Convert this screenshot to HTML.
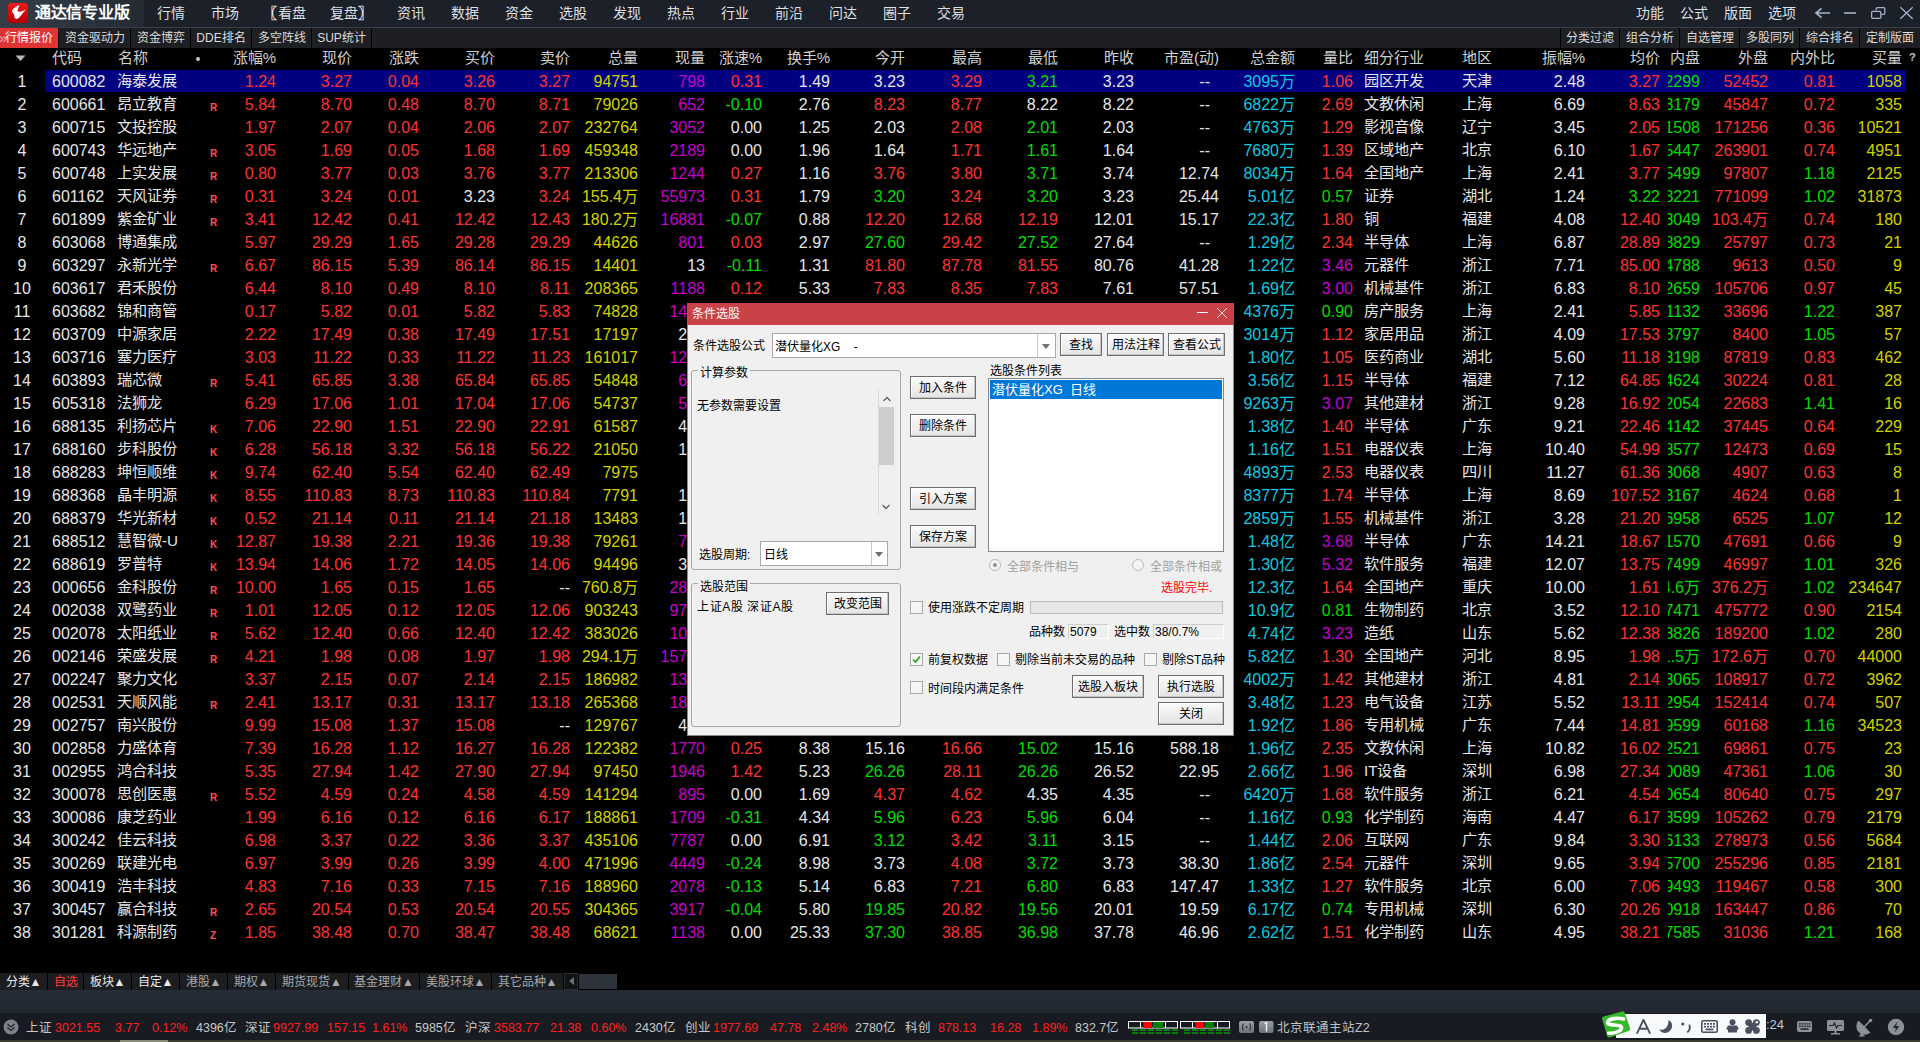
<!DOCTYPE html>
<html lang="zh-CN">
<head>
<meta charset="utf-8">
<style>
*{margin:0;padding:0;box-sizing:border-box}
html,body{width:1920px;height:1042px;overflow:hidden;background:#000}
body{position:relative;font-family:"Liberation Sans",sans-serif;color:#e6e6e6}
.abs{position:absolute}
/* menu bar */
#menu{position:absolute;left:0;top:0;width:1920px;height:27px;background:#1c2028}
#logoArea{position:absolute;left:0;top:0;width:144px;height:27px;background:linear-gradient(90deg,#363e49,#232a33)}
#logo{position:absolute;left:8px;top:3px;width:20px;height:20px;border-radius:4px;background:linear-gradient(#f01818,#b80000)}
#title{position:absolute;left:35px;top:2px;font-size:16px;font-weight:bold;color:#fff;line-height:22px;letter-spacing:-0.3px}
.mi{position:absolute;top:0;line-height:27px;font-size:14px;color:#dcdfe4}
#menuLine{position:absolute;left:0;top:27px;width:1920px;height:1px;background:#3a3f47}
/* tab bar */
#tabs{position:absolute;left:0;top:28px;width:1920px;height:20px;background:#1e1f22}
.tb{position:absolute;top:0;height:20px;line-height:20px;font-size:12px;color:#dcdcdc;text-align:center}
.tsep{position:absolute;top:0;width:1px;height:20px;background:#000}
/* header */
.hd{position:absolute;top:47px;height:22px;line-height:22px;font-size:15px;color:#d0d0d0;white-space:nowrap}
.hr{text-align:right;width:120px}
/* table */
.row{position:absolute;left:0;width:1920px;height:23px;font-size:16px;line-height:23px;white-space:nowrap}
.row i{position:absolute;top:0;font-style:normal}
.row.sel::before{content:"";position:absolute;left:45px;top:0;width:1861px;height:22px;background:#000080}
.row i.nm{color:#e6e6e6;font-size:15.2px;top:-1px}
.flag{position:absolute;left:210px;top:10px;font-size:10px;line-height:10px;color:#ff5050;font-weight:bold}
.nei{position:absolute;left:1668px;top:0;width:32px;height:23px;overflow:hidden}

/* dialog */
#dlg{position:absolute;left:687px;top:303px;width:547px;height:433px;background:#f0f0f0;box-shadow:inset 1px 0 0 #8a8a8a,inset -1px 0 0 #8a8a8a,inset 0 -1px 0 #8a8a8a;z-index:10;font-size:12px;color:#000}
#dlg::before{content:"";position:absolute;left:0;top:0;width:547px;height:22px;background:#c84248}
#dtitle{position:absolute;left:5px;top:3px;line-height:16px;font-size:12px;color:#fff}
.dmin{position:absolute;left:510px;top:10px;width:11px;height:1px;background:#fff}
.dx{position:absolute;left:529px;top:5px}
.dt{position:absolute;line-height:16px;font-size:12px;white-space:nowrap;color:#000}
.combo{position:absolute;background:#fff;border:1px solid #a8a8a8}
.cbsep{position:absolute;top:0;width:1px;height:23px;background:#c8c8c8}
.carr{position:absolute;width:0;height:0;border-left:4.5px solid transparent;border-right:4.5px solid transparent;border-top:5px solid #707070}
.btn{position:absolute;border:1px solid #6e6e6e;background:linear-gradient(#fbfbfb,#e4e4e4);font-size:12px;line-height:23px;text-align:center;color:#000;box-shadow:inset -1px -1px 0 #c6c6c6, inset 1px 1px 0 #fff}
.grp{position:absolute;border:1px solid #a8a8a8;border-radius:3px}
.glab{background:#f0f0f0;padding:0 2px}
.vsep{position:absolute;width:1px;background:#dcdcdc}
.radio{position:absolute;width:12px;height:12px;border-radius:50%;border:1px solid #b8b8b8;background:#f4f4f4}
.rdot{position:absolute;left:3px;top:3px;width:4px;height:4px;border-radius:50%;background:#909090}
.chk{position:absolute;width:13px;height:13px;border:1px solid #a8a8a8;background:#f6f6f6}
.fld{position:absolute;height:15px;line-height:14px;border:1px solid #d0d0d0;border-right-color:#fff;border-bottom-color:#fff;background:#f0f0f0;font-size:12px;padding-left:1px;color:#000}

/* bottom */
#btabs{position:absolute;left:0;top:973px;width:1920px;height:17px;background:#000}
.bt{position:absolute;top:0;height:17px;line-height:19px;background:#1b1d21;font-size:12px;color:#e8e8e8;text-align:center;white-space:nowrap}
.bt.g{color:#a8a8a8}
#strip{position:absolute;left:0;top:990px;width:1920px;height:23px;background:linear-gradient(#262c35,#222830)}
#status{position:absolute;left:0;top:1013px;width:1920px;height:27px;background:#181c22}
.st{position:absolute;top:2px;line-height:27px;font-size:12.5px;color:#c8c8c8;white-space:nowrap}
.st.r{color:#ff1e1e}
#sogou{position:absolute;left:1600px;top:1008px;z-index:5}
</style>
</head>
<body>
<div id="menu">
  <div id="logoArea"></div>
  <div id="title">通达信专业版</div>
  <div class="mi" style="left:157px">行情</div>
  <div class="mi" style="left:211px">市场</div>
  <div class="mi" style="left:263px;font-weight:bold">〖</div><div class="mi" style="left:278px">看盘</div>
  <div class="mi" style="left:330px">复盘</div><div class="mi" style="left:358px;font-weight:bold">〗</div>
  <div class="mi" style="left:397px">资讯</div>
  <div class="mi" style="left:451px">数据</div>
  <div class="mi" style="left:505px">资金</div>
  <div class="mi" style="left:559px">选股</div>
  <div class="mi" style="left:613px">发现</div>
  <div class="mi" style="left:667px">热点</div>
  <div class="mi" style="left:721px">行业</div>
  <div class="mi" style="left:775px">前沿</div>
  <div class="mi" style="left:829px">问达</div>
  <div class="mi" style="left:883px">圈子</div>
  <div class="mi" style="left:937px">交易</div>
  <div class="mi" style="left:1636px">功能</div>
  <div class="mi" style="left:1680px">公式</div>
  <div class="mi" style="left:1724px">版面</div>
  <div class="mi" style="left:1768px">选项</div>
  <svg class="abs" style="left:1800px;top:0" width="120" height="27" viewBox="0 0 120 27">
   <path d="M30 13H16.5M21.5 8.3L16 13L21.5 17.7" stroke="#a4b4c8" stroke-width="1.7" fill="none"/>
   <path d="M44 13H56" stroke="#a4b4c8" stroke-width="1.6"/>
   <path d="M76.2 10.2V8.8Q76.2 7.6 77.4 7.6H83.6Q84.8 7.6 84.8 8.8V13.2Q84.8 14.4 83.6 14.4H81.2" stroke="#a4b4c8" stroke-width="1.3" fill="none"/>
   <rect x="71.6" y="11.4" width="9.2" height="6.9" rx="1.2" stroke="#a4b4c8" stroke-width="1.3" fill="none"/>
   <path d="M100.3 7.3L112.7 18.7M112.7 7.3L100.3 18.7" stroke="#a4b4c8" stroke-width="1.3" fill="none"/>
  </svg>
  <svg class="abs" style="left:8px;top:3px" width="21" height="21" viewBox="0 0 21 21"><defs><linearGradient id="lg" x1="0" y1="0" x2="0" y2="1"><stop offset="0" stop-color="#f41a1a"/><stop offset="1" stop-color="#b00000"/></linearGradient></defs><rect x="0" y="0" width="20" height="20" rx="3.5" fill="url(#lg)"/><path d="M11.5 2C8 3.5 4.5 6 4 8C4 9.5 5.5 10.5 6.2 11.5C6 13.5 6.5 15.5 8.2 16C9.5 16 10.5 15.5 11.5 14.3L17.8 6.6C15.5 7.8 12.5 9.2 10.5 8.7C9.3 8.2 9.5 6.5 11.5 2Z" fill="#fff"/></svg>
</div>
<div id="menuLine"></div>
<div id="tabs">
  <div class="tb" style="left:0;width:58px;background:#e03434;color:#fff;text-align:left;padding-left:5px">行情报价</div><div class="abs" style="left:-1px;top:2px;font-size:15px;line-height:16px;color:#f0a8a8">»</div>
  <div class="tsep" style="left:58px"></div>
  <div class="tb" style="left:59px;width:71px">资金驱动力</div>
  <div class="tsep" style="left:130px"></div>
  <div class="tb" style="left:131px;width:59px">资金博弈</div>
  <div class="tsep" style="left:190px"></div>
  <div class="tb" style="left:191px;width:60px">DDE排名</div>
  <div class="tsep" style="left:251px"></div>
  <div class="tb" style="left:252px;width:59px">多空阵线</div>
  <div class="tsep" style="left:311px"></div>
  <div class="tb" style="left:312px;width:59px">SUP统计</div>
  <div class="tsep" style="left:371px"></div>
  <div class="tsep" style="left:1560px"></div>
  <div class="tb" style="left:1561px;width:58px">分类过滤</div>
  <div class="tsep" style="left:1619px"></div>
  <div class="tb" style="left:1620px;width:59px">组合分析</div>
  <div class="tsep" style="left:1679px"></div>
  <div class="tb" style="left:1680px;width:59px">自选管理</div>
  <div class="tsep" style="left:1739px"></div>
  <div class="tb" style="left:1740px;width:59px">多股同列</div>
  <div class="tsep" style="left:1799px"></div>
  <div class="tb" style="left:1800px;width:59px">综合排名</div>
  <div class="tsep" style="left:1859px"></div>
  <div class="tb" style="left:1860px;width:60px">定制版面</div>
</div>
<svg class="abs" style="left:15px;top:55px" width="11" height="7" viewBox="0 0 11 7"><path d="M0.5 0.5H10.5L5.5 6Z" fill="#b8b8b8"/></svg>
<div class="abs" style="left:196px;top:57px;width:4px;height:4px;border-radius:50%;background:#c8c8c8"></div>
<div class="abs" style="left:1909px;top:50px;font-size:11px;line-height:14px;color:#c8c8c8;font-weight:bold">?</div>
<!-- header -->
<div class="hd" style="left:52px">代码</div>
<div class="hd" style="left:118px">名称</div>
<div class="hd hr" style="left:156px">涨幅%</div>
<div class="hd hr" style="left:232px">现价</div>
<div class="hd hr" style="left:299px">涨跌</div>
<div class="hd hr" style="left:375px">买价</div>
<div class="hd hr" style="left:450px">卖价</div>
<div class="hd hr" style="left:518px">总量</div>
<div class="hd hr" style="left:585px">现量</div>
<div class="hd hr" style="left:642px">涨速%</div>
<div class="hd hr" style="left:710px">换手%</div>
<div class="hd hr" style="left:785px">今开</div>
<div class="hd hr" style="left:862px">最高</div>
<div class="hd hr" style="left:938px">最低</div>
<div class="hd hr" style="left:1014px">昨收</div>
<div class="hd hr" style="left:1099px">市盈(动)</div>
<div class="hd hr" style="left:1175px">总金额</div>
<div class="hd hr" style="left:1233px">量比</div>
<div class="hd" style="left:1364px">细分行业</div>
<div class="hd" style="left:1462px">地区</div>
<div class="hd hr" style="left:1465px">振幅%</div>
<div class="hd hr" style="left:1540px">均价</div>
<div class="hd hr" style="left:1580px">内盘</div>
<div class="hd hr" style="left:1648px">外盘</div>
<div class="hd hr" style="left:1715px">内外比</div>
<div class="hd hr" style="left:1782px">买量</div>
<div class="row sel" style="top:70px"><i style="left:-18px;width:80px;text-align:center;color:#e6e6e6">1</i><i style="left:52px;color:#e6e6e6">600082</i><i class="nm" style="left:117px">海泰发展</i><i style="left:156px;width:120px;text-align:right;color:#ff3232">1.24</i><i style="left:232px;width:120px;text-align:right;color:#ff3232">3.27</i><i style="left:375px;width:120px;text-align:right;color:#ff3232">3.26</i><i style="left:450px;width:120px;text-align:right;color:#ff3232">3.27</i><i style="left:299px;width:120px;text-align:right;color:#ff3232">0.04</i><i style="left:518px;width:120px;text-align:right;color:#d2d200">94751</i><i style="left:585px;width:120px;text-align:right;color:#c800c8">798</i><i style="left:642px;width:120px;text-align:right;color:#ff3232">0.31</i><i style="left:710px;width:120px;text-align:right;color:#e6e6e6">1.49</i><i style="left:785px;width:120px;text-align:right;color:#e6e6e6">3.23</i><i style="left:862px;width:120px;text-align:right;color:#ff3232">3.29</i><i style="left:938px;width:120px;text-align:right;color:#00dd00">3.21</i><i style="left:1014px;width:120px;text-align:right;color:#e6e6e6">3.23</i><i style="left:1090px;width:120px;text-align:right;color:#e6e6e6">--</i><i style="left:1175px;width:120px;text-align:right;color:#10c8e0">3095万</i><i style="left:1233px;width:120px;text-align:right;color:#ff3232">1.06</i><i class="nm" style="left:1364px">园区开发</i><i class="nm" style="left:1462px">天津</i><i style="left:1465px;width:120px;text-align:right;color:#e6e6e6">2.48</i><i style="left:1540px;width:120px;text-align:right;color:#ff3232">3.27</i><span class="nei"><i style="right:0;color:#00dd00">42299</i></span><i style="left:1648px;width:120px;text-align:right;color:#ff3232">52452</i><i style="left:1715px;width:120px;text-align:right;color:#ff3232">0.81</i><i style="left:1782px;width:120px;text-align:right;color:#d2d200">1058</i></div>
<div class="row" style="top:93px"><i style="left:-18px;width:80px;text-align:center;color:#e6e6e6">2</i><i style="left:52px;color:#e6e6e6">600661</i><i class="nm" style="left:117px">昂立教育</i><b class="flag">R</b><i style="left:156px;width:120px;text-align:right;color:#ff3232">5.84</i><i style="left:232px;width:120px;text-align:right;color:#ff3232">8.70</i><i style="left:375px;width:120px;text-align:right;color:#ff3232">8.70</i><i style="left:450px;width:120px;text-align:right;color:#ff3232">8.71</i><i style="left:299px;width:120px;text-align:right;color:#ff3232">0.48</i><i style="left:518px;width:120px;text-align:right;color:#d2d200">79026</i><i style="left:585px;width:120px;text-align:right;color:#c800c8">652</i><i style="left:642px;width:120px;text-align:right;color:#00dd00">-0.10</i><i style="left:710px;width:120px;text-align:right;color:#e6e6e6">2.76</i><i style="left:785px;width:120px;text-align:right;color:#ff3232">8.23</i><i style="left:862px;width:120px;text-align:right;color:#ff3232">8.77</i><i style="left:938px;width:120px;text-align:right;color:#e6e6e6">8.22</i><i style="left:1014px;width:120px;text-align:right;color:#e6e6e6">8.22</i><i style="left:1090px;width:120px;text-align:right;color:#e6e6e6">--</i><i style="left:1175px;width:120px;text-align:right;color:#10c8e0">6822万</i><i style="left:1233px;width:120px;text-align:right;color:#ff3232">2.69</i><i class="nm" style="left:1364px">文教休闲</i><i class="nm" style="left:1462px">上海</i><i style="left:1465px;width:120px;text-align:right;color:#e6e6e6">6.69</i><i style="left:1540px;width:120px;text-align:right;color:#ff3232">8.63</i><span class="nei"><i style="right:0;color:#00dd00">33179</i></span><i style="left:1648px;width:120px;text-align:right;color:#ff3232">45847</i><i style="left:1715px;width:120px;text-align:right;color:#ff3232">0.72</i><i style="left:1782px;width:120px;text-align:right;color:#d2d200">335</i></div>
<div class="row" style="top:116px"><i style="left:-18px;width:80px;text-align:center;color:#e6e6e6">3</i><i style="left:52px;color:#e6e6e6">600715</i><i class="nm" style="left:117px">文投控股</i><i style="left:156px;width:120px;text-align:right;color:#ff3232">1.97</i><i style="left:232px;width:120px;text-align:right;color:#ff3232">2.07</i><i style="left:375px;width:120px;text-align:right;color:#ff3232">2.06</i><i style="left:450px;width:120px;text-align:right;color:#ff3232">2.07</i><i style="left:299px;width:120px;text-align:right;color:#ff3232">0.04</i><i style="left:518px;width:120px;text-align:right;color:#d2d200">232764</i><i style="left:585px;width:120px;text-align:right;color:#c800c8">3052</i><i style="left:642px;width:120px;text-align:right;color:#e6e6e6">0.00</i><i style="left:710px;width:120px;text-align:right;color:#e6e6e6">1.25</i><i style="left:785px;width:120px;text-align:right;color:#e6e6e6">2.03</i><i style="left:862px;width:120px;text-align:right;color:#ff3232">2.08</i><i style="left:938px;width:120px;text-align:right;color:#00dd00">2.01</i><i style="left:1014px;width:120px;text-align:right;color:#e6e6e6">2.03</i><i style="left:1090px;width:120px;text-align:right;color:#e6e6e6">--</i><i style="left:1175px;width:120px;text-align:right;color:#10c8e0">4763万</i><i style="left:1233px;width:120px;text-align:right;color:#ff3232">1.29</i><i class="nm" style="left:1364px">影视音像</i><i class="nm" style="left:1462px">辽宁</i><i style="left:1465px;width:120px;text-align:right;color:#e6e6e6">3.45</i><i style="left:1540px;width:120px;text-align:right;color:#ff3232">2.05</i><span class="nei"><i style="right:0;color:#00dd00">61508</i></span><i style="left:1648px;width:120px;text-align:right;color:#ff3232">171256</i><i style="left:1715px;width:120px;text-align:right;color:#ff3232">0.36</i><i style="left:1782px;width:120px;text-align:right;color:#d2d200">10521</i></div>
<div class="row" style="top:139px"><i style="left:-18px;width:80px;text-align:center;color:#e6e6e6">4</i><i style="left:52px;color:#e6e6e6">600743</i><i class="nm" style="left:117px">华远地产</i><b class="flag">R</b><i style="left:156px;width:120px;text-align:right;color:#ff3232">3.05</i><i style="left:232px;width:120px;text-align:right;color:#ff3232">1.69</i><i style="left:375px;width:120px;text-align:right;color:#ff3232">1.68</i><i style="left:450px;width:120px;text-align:right;color:#ff3232">1.69</i><i style="left:299px;width:120px;text-align:right;color:#ff3232">0.05</i><i style="left:518px;width:120px;text-align:right;color:#d2d200">459348</i><i style="left:585px;width:120px;text-align:right;color:#c800c8">2189</i><i style="left:642px;width:120px;text-align:right;color:#e6e6e6">0.00</i><i style="left:710px;width:120px;text-align:right;color:#e6e6e6">1.96</i><i style="left:785px;width:120px;text-align:right;color:#e6e6e6">1.64</i><i style="left:862px;width:120px;text-align:right;color:#ff3232">1.71</i><i style="left:938px;width:120px;text-align:right;color:#00dd00">1.61</i><i style="left:1014px;width:120px;text-align:right;color:#e6e6e6">1.64</i><i style="left:1090px;width:120px;text-align:right;color:#e6e6e6">--</i><i style="left:1175px;width:120px;text-align:right;color:#10c8e0">7680万</i><i style="left:1233px;width:120px;text-align:right;color:#ff3232">1.39</i><i class="nm" style="left:1364px">区域地产</i><i class="nm" style="left:1462px">北京</i><i style="left:1465px;width:120px;text-align:right;color:#e6e6e6">6.10</i><i style="left:1540px;width:120px;text-align:right;color:#ff3232">1.67</i><span class="nei"><i style="right:0;color:#00dd00">195447</i></span><i style="left:1648px;width:120px;text-align:right;color:#ff3232">263901</i><i style="left:1715px;width:120px;text-align:right;color:#ff3232">0.74</i><i style="left:1782px;width:120px;text-align:right;color:#d2d200">4951</i></div>
<div class="row" style="top:162px"><i style="left:-18px;width:80px;text-align:center;color:#e6e6e6">5</i><i style="left:52px;color:#e6e6e6">600748</i><i class="nm" style="left:117px">上实发展</i><b class="flag">R</b><i style="left:156px;width:120px;text-align:right;color:#ff3232">0.80</i><i style="left:232px;width:120px;text-align:right;color:#ff3232">3.77</i><i style="left:375px;width:120px;text-align:right;color:#ff3232">3.76</i><i style="left:450px;width:120px;text-align:right;color:#ff3232">3.77</i><i style="left:299px;width:120px;text-align:right;color:#ff3232">0.03</i><i style="left:518px;width:120px;text-align:right;color:#d2d200">213306</i><i style="left:585px;width:120px;text-align:right;color:#c800c8">1244</i><i style="left:642px;width:120px;text-align:right;color:#ff3232">0.27</i><i style="left:710px;width:120px;text-align:right;color:#e6e6e6">1.16</i><i style="left:785px;width:120px;text-align:right;color:#ff3232">3.76</i><i style="left:862px;width:120px;text-align:right;color:#ff3232">3.80</i><i style="left:938px;width:120px;text-align:right;color:#00dd00">3.71</i><i style="left:1014px;width:120px;text-align:right;color:#e6e6e6">3.74</i><i style="left:1099px;width:120px;text-align:right;color:#e6e6e6">12.74</i><i style="left:1175px;width:120px;text-align:right;color:#10c8e0">8034万</i><i style="left:1233px;width:120px;text-align:right;color:#ff3232">1.64</i><i class="nm" style="left:1364px">全国地产</i><i class="nm" style="left:1462px">上海</i><i style="left:1465px;width:120px;text-align:right;color:#e6e6e6">2.41</i><i style="left:1540px;width:120px;text-align:right;color:#ff3232">3.77</i><span class="nei"><i style="right:0;color:#00dd00">115499</i></span><i style="left:1648px;width:120px;text-align:right;color:#ff3232">97807</i><i style="left:1715px;width:120px;text-align:right;color:#00dd00">1.18</i><i style="left:1782px;width:120px;text-align:right;color:#d2d200">2125</i></div>
<div class="row" style="top:185px"><i style="left:-18px;width:80px;text-align:center;color:#e6e6e6">6</i><i style="left:52px;color:#e6e6e6">601162</i><i class="nm" style="left:117px">天风证券</i><b class="flag">R</b><i style="left:156px;width:120px;text-align:right;color:#ff3232">0.31</i><i style="left:232px;width:120px;text-align:right;color:#ff3232">3.24</i><i style="left:375px;width:120px;text-align:right;color:#e6e6e6">3.23</i><i style="left:450px;width:120px;text-align:right;color:#ff3232">3.24</i><i style="left:299px;width:120px;text-align:right;color:#ff3232">0.01</i><i style="left:518px;width:120px;text-align:right;color:#d2d200">155.4万</i><i style="left:585px;width:120px;text-align:right;color:#c800c8">55973</i><i style="left:642px;width:120px;text-align:right;color:#ff3232">0.31</i><i style="left:710px;width:120px;text-align:right;color:#e6e6e6">1.79</i><i style="left:785px;width:120px;text-align:right;color:#00dd00">3.20</i><i style="left:862px;width:120px;text-align:right;color:#ff3232">3.24</i><i style="left:938px;width:120px;text-align:right;color:#00dd00">3.20</i><i style="left:1014px;width:120px;text-align:right;color:#e6e6e6">3.23</i><i style="left:1099px;width:120px;text-align:right;color:#e6e6e6">25.44</i><i style="left:1175px;width:120px;text-align:right;color:#10c8e0">5.01亿</i><i style="left:1233px;width:120px;text-align:right;color:#00dd00">0.57</i><i class="nm" style="left:1364px">证券</i><i class="nm" style="left:1462px">湖北</i><i style="left:1465px;width:120px;text-align:right;color:#e6e6e6">1.24</i><i style="left:1540px;width:120px;text-align:right;color:#00dd00">3.22</i><span class="nei"><i style="right:0;color:#00dd00">783221</i></span><i style="left:1648px;width:120px;text-align:right;color:#ff3232">771099</i><i style="left:1715px;width:120px;text-align:right;color:#00dd00">1.02</i><i style="left:1782px;width:120px;text-align:right;color:#d2d200">31873</i></div>
<div class="row" style="top:208px"><i style="left:-18px;width:80px;text-align:center;color:#e6e6e6">7</i><i style="left:52px;color:#e6e6e6">601899</i><i class="nm" style="left:117px">紫金矿业</i><b class="flag">R</b><i style="left:156px;width:120px;text-align:right;color:#ff3232">3.41</i><i style="left:232px;width:120px;text-align:right;color:#ff3232">12.42</i><i style="left:375px;width:120px;text-align:right;color:#ff3232">12.42</i><i style="left:450px;width:120px;text-align:right;color:#ff3232">12.43</i><i style="left:299px;width:120px;text-align:right;color:#ff3232">0.41</i><i style="left:518px;width:120px;text-align:right;color:#d2d200">180.2万</i><i style="left:585px;width:120px;text-align:right;color:#c800c8">16881</i><i style="left:642px;width:120px;text-align:right;color:#00dd00">-0.07</i><i style="left:710px;width:120px;text-align:right;color:#e6e6e6">0.88</i><i style="left:785px;width:120px;text-align:right;color:#ff3232">12.20</i><i style="left:862px;width:120px;text-align:right;color:#ff3232">12.68</i><i style="left:938px;width:120px;text-align:right;color:#ff3232">12.19</i><i style="left:1014px;width:120px;text-align:right;color:#e6e6e6">12.01</i><i style="left:1099px;width:120px;text-align:right;color:#e6e6e6">15.17</i><i style="left:1175px;width:120px;text-align:right;color:#10c8e0">22.3亿</i><i style="left:1233px;width:120px;text-align:right;color:#ff3232">1.80</i><i class="nm" style="left:1364px">铜</i><i class="nm" style="left:1462px">福建</i><i style="left:1465px;width:120px;text-align:right;color:#e6e6e6">4.08</i><i style="left:1540px;width:120px;text-align:right;color:#ff3232">12.40</i><span class="nei"><i style="right:0;color:#00dd00">763049</i></span><i style="left:1648px;width:120px;text-align:right;color:#ff3232">103.4万</i><i style="left:1715px;width:120px;text-align:right;color:#ff3232">0.74</i><i style="left:1782px;width:120px;text-align:right;color:#d2d200">180</i></div>
<div class="row" style="top:231px"><i style="left:-18px;width:80px;text-align:center;color:#e6e6e6">8</i><i style="left:52px;color:#e6e6e6">603068</i><i class="nm" style="left:117px">博通集成</i><i style="left:156px;width:120px;text-align:right;color:#ff3232">5.97</i><i style="left:232px;width:120px;text-align:right;color:#ff3232">29.29</i><i style="left:375px;width:120px;text-align:right;color:#ff3232">29.28</i><i style="left:450px;width:120px;text-align:right;color:#ff3232">29.29</i><i style="left:299px;width:120px;text-align:right;color:#ff3232">1.65</i><i style="left:518px;width:120px;text-align:right;color:#d2d200">44626</i><i style="left:585px;width:120px;text-align:right;color:#c800c8">801</i><i style="left:642px;width:120px;text-align:right;color:#ff3232">0.03</i><i style="left:710px;width:120px;text-align:right;color:#e6e6e6">2.97</i><i style="left:785px;width:120px;text-align:right;color:#00dd00">27.60</i><i style="left:862px;width:120px;text-align:right;color:#ff3232">29.42</i><i style="left:938px;width:120px;text-align:right;color:#00dd00">27.52</i><i style="left:1014px;width:120px;text-align:right;color:#e6e6e6">27.64</i><i style="left:1090px;width:120px;text-align:right;color:#e6e6e6">--</i><i style="left:1175px;width:120px;text-align:right;color:#10c8e0">1.29亿</i><i style="left:1233px;width:120px;text-align:right;color:#ff3232">2.34</i><i class="nm" style="left:1364px">半导体</i><i class="nm" style="left:1462px">上海</i><i style="left:1465px;width:120px;text-align:right;color:#e6e6e6">6.87</i><i style="left:1540px;width:120px;text-align:right;color:#ff3232">28.89</i><span class="nei"><i style="right:0;color:#00dd00">18829</i></span><i style="left:1648px;width:120px;text-align:right;color:#ff3232">25797</i><i style="left:1715px;width:120px;text-align:right;color:#ff3232">0.73</i><i style="left:1782px;width:120px;text-align:right;color:#d2d200">21</i></div>
<div class="row" style="top:254px"><i style="left:-18px;width:80px;text-align:center;color:#e6e6e6">9</i><i style="left:52px;color:#e6e6e6">603297</i><i class="nm" style="left:117px">永新光学</i><b class="flag">R</b><i style="left:156px;width:120px;text-align:right;color:#ff3232">6.67</i><i style="left:232px;width:120px;text-align:right;color:#ff3232">86.15</i><i style="left:375px;width:120px;text-align:right;color:#ff3232">86.14</i><i style="left:450px;width:120px;text-align:right;color:#ff3232">86.15</i><i style="left:299px;width:120px;text-align:right;color:#ff3232">5.39</i><i style="left:518px;width:120px;text-align:right;color:#d2d200">14401</i><i style="left:585px;width:120px;text-align:right;color:#e6e6e6">13</i><i style="left:642px;width:120px;text-align:right;color:#00dd00">-0.11</i><i style="left:710px;width:120px;text-align:right;color:#e6e6e6">1.31</i><i style="left:785px;width:120px;text-align:right;color:#ff3232">81.80</i><i style="left:862px;width:120px;text-align:right;color:#ff3232">87.78</i><i style="left:938px;width:120px;text-align:right;color:#ff3232">81.55</i><i style="left:1014px;width:120px;text-align:right;color:#e6e6e6">80.76</i><i style="left:1099px;width:120px;text-align:right;color:#e6e6e6">41.28</i><i style="left:1175px;width:120px;text-align:right;color:#10c8e0">1.22亿</i><i style="left:1233px;width:120px;text-align:right;color:#c800c8">3.46</i><i class="nm" style="left:1364px">元器件</i><i class="nm" style="left:1462px">浙江</i><i style="left:1465px;width:120px;text-align:right;color:#e6e6e6">7.71</i><i style="left:1540px;width:120px;text-align:right;color:#ff3232">85.00</i><span class="nei"><i style="right:0;color:#00dd00">4788</i></span><i style="left:1648px;width:120px;text-align:right;color:#ff3232">9613</i><i style="left:1715px;width:120px;text-align:right;color:#ff3232">0.50</i><i style="left:1782px;width:120px;text-align:right;color:#d2d200">9</i></div>
<div class="row" style="top:277px"><i style="left:-18px;width:80px;text-align:center;color:#e6e6e6">10</i><i style="left:52px;color:#e6e6e6">603617</i><i class="nm" style="left:117px">君禾股份</i><i style="left:156px;width:120px;text-align:right;color:#ff3232">6.44</i><i style="left:232px;width:120px;text-align:right;color:#ff3232">8.10</i><i style="left:375px;width:120px;text-align:right;color:#ff3232">8.10</i><i style="left:450px;width:120px;text-align:right;color:#ff3232">8.11</i><i style="left:299px;width:120px;text-align:right;color:#ff3232">0.49</i><i style="left:518px;width:120px;text-align:right;color:#d2d200">208365</i><i style="left:585px;width:120px;text-align:right;color:#c800c8">1188</i><i style="left:642px;width:120px;text-align:right;color:#ff3232">0.12</i><i style="left:710px;width:120px;text-align:right;color:#e6e6e6">5.33</i><i style="left:785px;width:120px;text-align:right;color:#ff3232">7.83</i><i style="left:862px;width:120px;text-align:right;color:#ff3232">8.35</i><i style="left:938px;width:120px;text-align:right;color:#ff3232">7.83</i><i style="left:1014px;width:120px;text-align:right;color:#e6e6e6">7.61</i><i style="left:1099px;width:120px;text-align:right;color:#e6e6e6">57.51</i><i style="left:1175px;width:120px;text-align:right;color:#10c8e0">1.69亿</i><i style="left:1233px;width:120px;text-align:right;color:#c800c8">3.00</i><i class="nm" style="left:1364px">机械基件</i><i class="nm" style="left:1462px">浙江</i><i style="left:1465px;width:120px;text-align:right;color:#e6e6e6">6.83</i><i style="left:1540px;width:120px;text-align:right;color:#ff3232">8.10</i><span class="nei"><i style="right:0;color:#00dd00">102659</i></span><i style="left:1648px;width:120px;text-align:right;color:#ff3232">105706</i><i style="left:1715px;width:120px;text-align:right;color:#ff3232">0.97</i><i style="left:1782px;width:120px;text-align:right;color:#d2d200">45</i></div>
<div class="row" style="top:300px"><i style="left:-18px;width:80px;text-align:center;color:#e6e6e6">11</i><i style="left:52px;color:#e6e6e6">603682</i><i class="nm" style="left:117px">锦和商管</i><i style="left:156px;width:120px;text-align:right;color:#ff3232">0.17</i><i style="left:232px;width:120px;text-align:right;color:#ff3232">5.82</i><i style="left:375px;width:120px;text-align:right;color:#ff3232">5.82</i><i style="left:450px;width:120px;text-align:right;color:#ff3232">5.83</i><i style="left:299px;width:120px;text-align:right;color:#ff3232">0.01</i><i style="left:518px;width:120px;text-align:right;color:#d2d200">74828</i><i style="left:585px;width:120px;text-align:right;color:#c800c8">1400</i><i style="left:1175px;width:120px;text-align:right;color:#10c8e0">4376万</i><i style="left:1233px;width:120px;text-align:right;color:#00dd00">0.90</i><i class="nm" style="left:1364px">房产服务</i><i class="nm" style="left:1462px">上海</i><i style="left:1465px;width:120px;text-align:right;color:#e6e6e6">2.41</i><i style="left:1540px;width:120px;text-align:right;color:#ff3232">5.85</i><span class="nei"><i style="right:0;color:#00dd00">41132</i></span><i style="left:1648px;width:120px;text-align:right;color:#ff3232">33696</i><i style="left:1715px;width:120px;text-align:right;color:#00dd00">1.22</i><i style="left:1782px;width:120px;text-align:right;color:#d2d200">387</i></div>
<div class="row" style="top:323px"><i style="left:-18px;width:80px;text-align:center;color:#e6e6e6">12</i><i style="left:52px;color:#e6e6e6">603709</i><i class="nm" style="left:117px">中源家居</i><i style="left:156px;width:120px;text-align:right;color:#ff3232">2.22</i><i style="left:232px;width:120px;text-align:right;color:#ff3232">17.49</i><i style="left:375px;width:120px;text-align:right;color:#ff3232">17.49</i><i style="left:450px;width:120px;text-align:right;color:#ff3232">17.51</i><i style="left:299px;width:120px;text-align:right;color:#ff3232">0.38</i><i style="left:518px;width:120px;text-align:right;color:#d2d200">17197</i><i style="left:585px;width:120px;text-align:right;color:#e6e6e6">200</i><i style="left:1175px;width:120px;text-align:right;color:#10c8e0">3014万</i><i style="left:1233px;width:120px;text-align:right;color:#ff3232">1.12</i><i class="nm" style="left:1364px">家居用品</i><i class="nm" style="left:1462px">浙江</i><i style="left:1465px;width:120px;text-align:right;color:#e6e6e6">4.09</i><i style="left:1540px;width:120px;text-align:right;color:#ff3232">17.53</i><span class="nei"><i style="right:0;color:#00dd00">8797</i></span><i style="left:1648px;width:120px;text-align:right;color:#ff3232">8400</i><i style="left:1715px;width:120px;text-align:right;color:#00dd00">1.05</i><i style="left:1782px;width:120px;text-align:right;color:#d2d200">57</i></div>
<div class="row" style="top:346px"><i style="left:-18px;width:80px;text-align:center;color:#e6e6e6">13</i><i style="left:52px;color:#e6e6e6">603716</i><i class="nm" style="left:117px">塞力医疗</i><i style="left:156px;width:120px;text-align:right;color:#ff3232">3.03</i><i style="left:232px;width:120px;text-align:right;color:#ff3232">11.22</i><i style="left:375px;width:120px;text-align:right;color:#ff3232">11.22</i><i style="left:450px;width:120px;text-align:right;color:#ff3232">11.23</i><i style="left:299px;width:120px;text-align:right;color:#ff3232">0.33</i><i style="left:518px;width:120px;text-align:right;color:#d2d200">161017</i><i style="left:585px;width:120px;text-align:right;color:#c800c8">1200</i><i style="left:1175px;width:120px;text-align:right;color:#10c8e0">1.80亿</i><i style="left:1233px;width:120px;text-align:right;color:#ff3232">1.05</i><i class="nm" style="left:1364px">医药商业</i><i class="nm" style="left:1462px">湖北</i><i style="left:1465px;width:120px;text-align:right;color:#e6e6e6">5.60</i><i style="left:1540px;width:120px;text-align:right;color:#ff3232">11.18</i><span class="nei"><i style="right:0;color:#00dd00">73198</i></span><i style="left:1648px;width:120px;text-align:right;color:#ff3232">87819</i><i style="left:1715px;width:120px;text-align:right;color:#ff3232">0.83</i><i style="left:1782px;width:120px;text-align:right;color:#d2d200">462</i></div>
<div class="row" style="top:369px"><i style="left:-18px;width:80px;text-align:center;color:#e6e6e6">14</i><i style="left:52px;color:#e6e6e6">603893</i><i class="nm" style="left:117px">瑞芯微</i><b class="flag">R</b><i style="left:156px;width:120px;text-align:right;color:#ff3232">5.41</i><i style="left:232px;width:120px;text-align:right;color:#ff3232">65.85</i><i style="left:375px;width:120px;text-align:right;color:#ff3232">65.84</i><i style="left:450px;width:120px;text-align:right;color:#ff3232">65.85</i><i style="left:299px;width:120px;text-align:right;color:#ff3232">3.38</i><i style="left:518px;width:120px;text-align:right;color:#d2d200">54848</i><i style="left:585px;width:120px;text-align:right;color:#c800c8">600</i><i style="left:1175px;width:120px;text-align:right;color:#10c8e0">3.56亿</i><i style="left:1233px;width:120px;text-align:right;color:#ff3232">1.15</i><i class="nm" style="left:1364px">半导体</i><i class="nm" style="left:1462px">福建</i><i style="left:1465px;width:120px;text-align:right;color:#e6e6e6">7.12</i><i style="left:1540px;width:120px;text-align:right;color:#ff3232">64.85</i><span class="nei"><i style="right:0;color:#00dd00">24624</i></span><i style="left:1648px;width:120px;text-align:right;color:#ff3232">30224</i><i style="left:1715px;width:120px;text-align:right;color:#ff3232">0.81</i><i style="left:1782px;width:120px;text-align:right;color:#d2d200">28</i></div>
<div class="row" style="top:392px"><i style="left:-18px;width:80px;text-align:center;color:#e6e6e6">15</i><i style="left:52px;color:#e6e6e6">605318</i><i class="nm" style="left:117px">法狮龙</i><i style="left:156px;width:120px;text-align:right;color:#ff3232">6.29</i><i style="left:232px;width:120px;text-align:right;color:#ff3232">17.06</i><i style="left:375px;width:120px;text-align:right;color:#ff3232">17.04</i><i style="left:450px;width:120px;text-align:right;color:#ff3232">17.06</i><i style="left:299px;width:120px;text-align:right;color:#ff3232">1.01</i><i style="left:518px;width:120px;text-align:right;color:#d2d200">54737</i><i style="left:585px;width:120px;text-align:right;color:#c800c8">500</i><i style="left:1175px;width:120px;text-align:right;color:#10c8e0">9263万</i><i style="left:1233px;width:120px;text-align:right;color:#c800c8">3.07</i><i class="nm" style="left:1364px">其他建材</i><i class="nm" style="left:1462px">浙江</i><i style="left:1465px;width:120px;text-align:right;color:#e6e6e6">9.28</i><i style="left:1540px;width:120px;text-align:right;color:#ff3232">16.92</i><span class="nei"><i style="right:0;color:#00dd00">32054</i></span><i style="left:1648px;width:120px;text-align:right;color:#ff3232">22683</i><i style="left:1715px;width:120px;text-align:right;color:#00dd00">1.41</i><i style="left:1782px;width:120px;text-align:right;color:#d2d200">16</i></div>
<div class="row" style="top:415px"><i style="left:-18px;width:80px;text-align:center;color:#e6e6e6">16</i><i style="left:52px;color:#e6e6e6">688135</i><i class="nm" style="left:117px">利扬芯片</i><b class="flag">K</b><i style="left:156px;width:120px;text-align:right;color:#ff3232">7.06</i><i style="left:232px;width:120px;text-align:right;color:#ff3232">22.90</i><i style="left:375px;width:120px;text-align:right;color:#ff3232">22.90</i><i style="left:450px;width:120px;text-align:right;color:#ff3232">22.91</i><i style="left:299px;width:120px;text-align:right;color:#ff3232">1.51</i><i style="left:518px;width:120px;text-align:right;color:#d2d200">61587</i><i style="left:585px;width:120px;text-align:right;color:#e6e6e6">400</i><i style="left:1175px;width:120px;text-align:right;color:#10c8e0">1.38亿</i><i style="left:1233px;width:120px;text-align:right;color:#ff3232">1.40</i><i class="nm" style="left:1364px">半导体</i><i class="nm" style="left:1462px">广东</i><i style="left:1465px;width:120px;text-align:right;color:#e6e6e6">9.21</i><i style="left:1540px;width:120px;text-align:right;color:#ff3232">22.46</i><span class="nei"><i style="right:0;color:#00dd00">24142</i></span><i style="left:1648px;width:120px;text-align:right;color:#ff3232">37445</i><i style="left:1715px;width:120px;text-align:right;color:#ff3232">0.64</i><i style="left:1782px;width:120px;text-align:right;color:#d2d200">229</i></div>
<div class="row" style="top:438px"><i style="left:-18px;width:80px;text-align:center;color:#e6e6e6">17</i><i style="left:52px;color:#e6e6e6">688160</i><i class="nm" style="left:117px">步科股份</i><b class="flag">K</b><i style="left:156px;width:120px;text-align:right;color:#ff3232">6.28</i><i style="left:232px;width:120px;text-align:right;color:#ff3232">56.18</i><i style="left:375px;width:120px;text-align:right;color:#ff3232">56.18</i><i style="left:450px;width:120px;text-align:right;color:#ff3232">56.22</i><i style="left:299px;width:120px;text-align:right;color:#ff3232">3.32</i><i style="left:518px;width:120px;text-align:right;color:#d2d200">21050</i><i style="left:585px;width:120px;text-align:right;color:#e6e6e6">100</i><i style="left:1175px;width:120px;text-align:right;color:#10c8e0">1.16亿</i><i style="left:1233px;width:120px;text-align:right;color:#ff3232">1.51</i><i class="nm" style="left:1364px">电器仪表</i><i class="nm" style="left:1462px">上海</i><i style="left:1465px;width:120px;text-align:right;color:#e6e6e6">10.40</i><i style="left:1540px;width:120px;text-align:right;color:#ff3232">54.99</i><span class="nei"><i style="right:0;color:#00dd00">8577</i></span><i style="left:1648px;width:120px;text-align:right;color:#ff3232">12473</i><i style="left:1715px;width:120px;text-align:right;color:#ff3232">0.69</i><i style="left:1782px;width:120px;text-align:right;color:#d2d200">15</i></div>
<div class="row" style="top:461px"><i style="left:-18px;width:80px;text-align:center;color:#e6e6e6">18</i><i style="left:52px;color:#e6e6e6">688283</i><i class="nm" style="left:117px">坤恒顺维</i><b class="flag">K</b><i style="left:156px;width:120px;text-align:right;color:#ff3232">9.74</i><i style="left:232px;width:120px;text-align:right;color:#ff3232">62.40</i><i style="left:375px;width:120px;text-align:right;color:#ff3232">62.40</i><i style="left:450px;width:120px;text-align:right;color:#ff3232">62.49</i><i style="left:299px;width:120px;text-align:right;color:#ff3232">5.54</i><i style="left:518px;width:120px;text-align:right;color:#d2d200">7975</i><i style="left:585px;width:120px;text-align:right;color:#e6e6e6">10</i><i style="left:1175px;width:120px;text-align:right;color:#10c8e0">4893万</i><i style="left:1233px;width:120px;text-align:right;color:#ff3232">2.53</i><i class="nm" style="left:1364px">电器仪表</i><i class="nm" style="left:1462px">四川</i><i style="left:1465px;width:120px;text-align:right;color:#e6e6e6">11.27</i><i style="left:1540px;width:120px;text-align:right;color:#ff3232">61.36</i><span class="nei"><i style="right:0;color:#00dd00">3068</i></span><i style="left:1648px;width:120px;text-align:right;color:#ff3232">4907</i><i style="left:1715px;width:120px;text-align:right;color:#ff3232">0.63</i><i style="left:1782px;width:120px;text-align:right;color:#d2d200">8</i></div>
<div class="row" style="top:484px"><i style="left:-18px;width:80px;text-align:center;color:#e6e6e6">19</i><i style="left:52px;color:#e6e6e6">688368</i><i class="nm" style="left:117px">晶丰明源</i><b class="flag">K</b><i style="left:156px;width:120px;text-align:right;color:#ff3232">8.55</i><i style="left:232px;width:120px;text-align:right;color:#ff3232">110.83</i><i style="left:375px;width:120px;text-align:right;color:#ff3232">110.83</i><i style="left:450px;width:120px;text-align:right;color:#ff3232">110.84</i><i style="left:299px;width:120px;text-align:right;color:#ff3232">8.73</i><i style="left:518px;width:120px;text-align:right;color:#d2d200">7791</i><i style="left:585px;width:120px;text-align:right;color:#e6e6e6">100</i><i style="left:1175px;width:120px;text-align:right;color:#10c8e0">8377万</i><i style="left:1233px;width:120px;text-align:right;color:#ff3232">1.74</i><i class="nm" style="left:1364px">半导体</i><i class="nm" style="left:1462px">上海</i><i style="left:1465px;width:120px;text-align:right;color:#e6e6e6">8.69</i><i style="left:1540px;width:120px;text-align:right;color:#ff3232">107.52</i><span class="nei"><i style="right:0;color:#00dd00">3167</i></span><i style="left:1648px;width:120px;text-align:right;color:#ff3232">4624</i><i style="left:1715px;width:120px;text-align:right;color:#ff3232">0.68</i><i style="left:1782px;width:120px;text-align:right;color:#d2d200">1</i></div>
<div class="row" style="top:507px"><i style="left:-18px;width:80px;text-align:center;color:#e6e6e6">20</i><i style="left:52px;color:#e6e6e6">688379</i><i class="nm" style="left:117px">华光新材</i><b class="flag">K</b><i style="left:156px;width:120px;text-align:right;color:#ff3232">0.52</i><i style="left:232px;width:120px;text-align:right;color:#ff3232">21.14</i><i style="left:375px;width:120px;text-align:right;color:#ff3232">21.14</i><i style="left:450px;width:120px;text-align:right;color:#ff3232">21.18</i><i style="left:299px;width:120px;text-align:right;color:#ff3232">0.11</i><i style="left:518px;width:120px;text-align:right;color:#d2d200">13483</i><i style="left:585px;width:120px;text-align:right;color:#e6e6e6">100</i><i style="left:1175px;width:120px;text-align:right;color:#10c8e0">2859万</i><i style="left:1233px;width:120px;text-align:right;color:#ff3232">1.55</i><i class="nm" style="left:1364px">机械基件</i><i class="nm" style="left:1462px">浙江</i><i style="left:1465px;width:120px;text-align:right;color:#e6e6e6">3.28</i><i style="left:1540px;width:120px;text-align:right;color:#ff3232">21.20</i><span class="nei"><i style="right:0;color:#00dd00">6958</i></span><i style="left:1648px;width:120px;text-align:right;color:#ff3232">6525</i><i style="left:1715px;width:120px;text-align:right;color:#00dd00">1.07</i><i style="left:1782px;width:120px;text-align:right;color:#d2d200">12</i></div>
<div class="row" style="top:530px"><i style="left:-18px;width:80px;text-align:center;color:#e6e6e6">21</i><i style="left:52px;color:#e6e6e6">688512</i><i class="nm" style="left:117px">慧智微-U</i><b class="flag">K</b><i style="left:156px;width:120px;text-align:right;color:#ff3232">12.87</i><i style="left:232px;width:120px;text-align:right;color:#ff3232">19.38</i><i style="left:375px;width:120px;text-align:right;color:#ff3232">19.36</i><i style="left:450px;width:120px;text-align:right;color:#ff3232">19.38</i><i style="left:299px;width:120px;text-align:right;color:#ff3232">2.21</i><i style="left:518px;width:120px;text-align:right;color:#d2d200">79261</i><i style="left:585px;width:120px;text-align:right;color:#c800c8">700</i><i style="left:1175px;width:120px;text-align:right;color:#10c8e0">1.48亿</i><i style="left:1233px;width:120px;text-align:right;color:#c800c8">3.68</i><i class="nm" style="left:1364px">半导体</i><i class="nm" style="left:1462px">广东</i><i style="left:1465px;width:120px;text-align:right;color:#e6e6e6">14.21</i><i style="left:1540px;width:120px;text-align:right;color:#ff3232">18.67</i><span class="nei"><i style="right:0;color:#00dd00">31570</i></span><i style="left:1648px;width:120px;text-align:right;color:#ff3232">47691</i><i style="left:1715px;width:120px;text-align:right;color:#ff3232">0.66</i><i style="left:1782px;width:120px;text-align:right;color:#d2d200">9</i></div>
<div class="row" style="top:553px"><i style="left:-18px;width:80px;text-align:center;color:#e6e6e6">22</i><i style="left:52px;color:#e6e6e6">688619</i><i class="nm" style="left:117px">罗普特</i><b class="flag">K</b><i style="left:156px;width:120px;text-align:right;color:#ff3232">13.94</i><i style="left:232px;width:120px;text-align:right;color:#ff3232">14.06</i><i style="left:375px;width:120px;text-align:right;color:#ff3232">14.05</i><i style="left:450px;width:120px;text-align:right;color:#ff3232">14.06</i><i style="left:299px;width:120px;text-align:right;color:#ff3232">1.72</i><i style="left:518px;width:120px;text-align:right;color:#d2d200">94496</i><i style="left:585px;width:120px;text-align:right;color:#e6e6e6">300</i><i style="left:1175px;width:120px;text-align:right;color:#10c8e0">1.30亿</i><i style="left:1233px;width:120px;text-align:right;color:#c800c8">5.32</i><i class="nm" style="left:1364px">软件服务</i><i class="nm" style="left:1462px">福建</i><i style="left:1465px;width:120px;text-align:right;color:#e6e6e6">12.07</i><i style="left:1540px;width:120px;text-align:right;color:#ff3232">13.75</i><span class="nei"><i style="right:0;color:#00dd00">47499</i></span><i style="left:1648px;width:120px;text-align:right;color:#ff3232">46997</i><i style="left:1715px;width:120px;text-align:right;color:#00dd00">1.01</i><i style="left:1782px;width:120px;text-align:right;color:#d2d200">326</i></div>
<div class="row" style="top:576px"><i style="left:-18px;width:80px;text-align:center;color:#e6e6e6">23</i><i style="left:52px;color:#e6e6e6">000656</i><i class="nm" style="left:117px">金科股份</i><b class="flag">R</b><i style="left:156px;width:120px;text-align:right;color:#ff3232">10.00</i><i style="left:232px;width:120px;text-align:right;color:#ff3232">1.65</i><i style="left:375px;width:120px;text-align:right;color:#ff3232">1.65</i><i style="left:450px;width:120px;text-align:right;color:#e6e6e6">--</i><i style="left:299px;width:120px;text-align:right;color:#ff3232">0.15</i><i style="left:518px;width:120px;text-align:right;color:#d2d200">760.8万</i><i style="left:585px;width:120px;text-align:right;color:#c800c8">2800</i><i style="left:1175px;width:120px;text-align:right;color:#10c8e0">12.3亿</i><i style="left:1233px;width:120px;text-align:right;color:#ff3232">1.64</i><i class="nm" style="left:1364px">全国地产</i><i class="nm" style="left:1462px">重庆</i><i style="left:1465px;width:120px;text-align:right;color:#e6e6e6">10.00</i><i style="left:1540px;width:120px;text-align:right;color:#ff3232">1.61</i><span class="nei"><i style="right:0;color:#00dd00">384.6万</i></span><i style="left:1648px;width:120px;text-align:right;color:#ff3232">376.2万</i><i style="left:1715px;width:120px;text-align:right;color:#00dd00">1.02</i><i style="left:1782px;width:120px;text-align:right;color:#d2d200">234647</i></div>
<div class="row" style="top:599px"><i style="left:-18px;width:80px;text-align:center;color:#e6e6e6">24</i><i style="left:52px;color:#e6e6e6">002038</i><i class="nm" style="left:117px">双鹭药业</i><b class="flag">R</b><i style="left:156px;width:120px;text-align:right;color:#ff3232">1.01</i><i style="left:232px;width:120px;text-align:right;color:#ff3232">12.05</i><i style="left:375px;width:120px;text-align:right;color:#ff3232">12.05</i><i style="left:450px;width:120px;text-align:right;color:#ff3232">12.06</i><i style="left:299px;width:120px;text-align:right;color:#ff3232">0.12</i><i style="left:518px;width:120px;text-align:right;color:#d2d200">903243</i><i style="left:585px;width:120px;text-align:right;color:#c800c8">9700</i><i style="left:1175px;width:120px;text-align:right;color:#10c8e0">10.9亿</i><i style="left:1233px;width:120px;text-align:right;color:#00dd00">0.81</i><i class="nm" style="left:1364px">生物制药</i><i class="nm" style="left:1462px">北京</i><i style="left:1465px;width:120px;text-align:right;color:#e6e6e6">3.52</i><i style="left:1540px;width:120px;text-align:right;color:#ff3232">12.10</i><span class="nei"><i style="right:0;color:#00dd00">427471</i></span><i style="left:1648px;width:120px;text-align:right;color:#ff3232">475772</i><i style="left:1715px;width:120px;text-align:right;color:#ff3232">0.90</i><i style="left:1782px;width:120px;text-align:right;color:#d2d200">2154</i></div>
<div class="row" style="top:622px"><i style="left:-18px;width:80px;text-align:center;color:#e6e6e6">25</i><i style="left:52px;color:#e6e6e6">002078</i><i class="nm" style="left:117px">太阳纸业</i><b class="flag">R</b><i style="left:156px;width:120px;text-align:right;color:#ff3232">5.62</i><i style="left:232px;width:120px;text-align:right;color:#ff3232">12.40</i><i style="left:375px;width:120px;text-align:right;color:#ff3232">12.40</i><i style="left:450px;width:120px;text-align:right;color:#ff3232">12.42</i><i style="left:299px;width:120px;text-align:right;color:#ff3232">0.66</i><i style="left:518px;width:120px;text-align:right;color:#d2d200">383026</i><i style="left:585px;width:120px;text-align:right;color:#c800c8">1000</i><i style="left:1175px;width:120px;text-align:right;color:#10c8e0">4.74亿</i><i style="left:1233px;width:120px;text-align:right;color:#c800c8">3.23</i><i class="nm" style="left:1364px">造纸</i><i class="nm" style="left:1462px">山东</i><i style="left:1465px;width:120px;text-align:right;color:#e6e6e6">5.62</i><i style="left:1540px;width:120px;text-align:right;color:#ff3232">12.38</i><span class="nei"><i style="right:0;color:#00dd00">193826</i></span><i style="left:1648px;width:120px;text-align:right;color:#ff3232">189200</i><i style="left:1715px;width:120px;text-align:right;color:#00dd00">1.02</i><i style="left:1782px;width:120px;text-align:right;color:#d2d200">280</i></div>
<div class="row" style="top:645px"><i style="left:-18px;width:80px;text-align:center;color:#e6e6e6">26</i><i style="left:52px;color:#e6e6e6">002146</i><i class="nm" style="left:117px">荣盛发展</i><b class="flag">R</b><i style="left:156px;width:120px;text-align:right;color:#ff3232">4.21</i><i style="left:232px;width:120px;text-align:right;color:#ff3232">1.98</i><i style="left:375px;width:120px;text-align:right;color:#ff3232">1.97</i><i style="left:450px;width:120px;text-align:right;color:#ff3232">1.98</i><i style="left:299px;width:120px;text-align:right;color:#ff3232">0.08</i><i style="left:518px;width:120px;text-align:right;color:#d2d200">294.1万</i><i style="left:585px;width:120px;text-align:right;color:#c800c8">15700</i><i style="left:1175px;width:120px;text-align:right;color:#10c8e0">5.82亿</i><i style="left:1233px;width:120px;text-align:right;color:#ff3232">1.30</i><i class="nm" style="left:1364px">全国地产</i><i class="nm" style="left:1462px">河北</i><i style="left:1465px;width:120px;text-align:right;color:#e6e6e6">8.95</i><i style="left:1540px;width:120px;text-align:right;color:#ff3232">1.98</i><span class="nei"><i style="right:0;color:#00dd00">121.5万</i></span><i style="left:1648px;width:120px;text-align:right;color:#ff3232">172.6万</i><i style="left:1715px;width:120px;text-align:right;color:#ff3232">0.70</i><i style="left:1782px;width:120px;text-align:right;color:#d2d200">44000</i></div>
<div class="row" style="top:668px"><i style="left:-18px;width:80px;text-align:center;color:#e6e6e6">27</i><i style="left:52px;color:#e6e6e6">002247</i><i class="nm" style="left:117px">聚力文化</i><i style="left:156px;width:120px;text-align:right;color:#ff3232">3.37</i><i style="left:232px;width:120px;text-align:right;color:#ff3232">2.15</i><i style="left:375px;width:120px;text-align:right;color:#ff3232">2.14</i><i style="left:450px;width:120px;text-align:right;color:#ff3232">2.15</i><i style="left:299px;width:120px;text-align:right;color:#ff3232">0.07</i><i style="left:518px;width:120px;text-align:right;color:#d2d200">186982</i><i style="left:585px;width:120px;text-align:right;color:#c800c8">1300</i><i style="left:1175px;width:120px;text-align:right;color:#10c8e0">4002万</i><i style="left:1233px;width:120px;text-align:right;color:#ff3232">1.42</i><i class="nm" style="left:1364px">其他建材</i><i class="nm" style="left:1462px">浙江</i><i style="left:1465px;width:120px;text-align:right;color:#e6e6e6">4.81</i><i style="left:1540px;width:120px;text-align:right;color:#ff3232">2.14</i><span class="nei"><i style="right:0;color:#00dd00">78065</i></span><i style="left:1648px;width:120px;text-align:right;color:#ff3232">108917</i><i style="left:1715px;width:120px;text-align:right;color:#ff3232">0.72</i><i style="left:1782px;width:120px;text-align:right;color:#d2d200">3962</i></div>
<div class="row" style="top:691px"><i style="left:-18px;width:80px;text-align:center;color:#e6e6e6">28</i><i style="left:52px;color:#e6e6e6">002531</i><i class="nm" style="left:117px">天顺风能</i><b class="flag">R</b><i style="left:156px;width:120px;text-align:right;color:#ff3232">2.41</i><i style="left:232px;width:120px;text-align:right;color:#ff3232">13.17</i><i style="left:375px;width:120px;text-align:right;color:#ff3232">13.17</i><i style="left:450px;width:120px;text-align:right;color:#ff3232">13.18</i><i style="left:299px;width:120px;text-align:right;color:#ff3232">0.31</i><i style="left:518px;width:120px;text-align:right;color:#d2d200">265368</i><i style="left:585px;width:120px;text-align:right;color:#c800c8">1800</i><i style="left:1175px;width:120px;text-align:right;color:#10c8e0">3.48亿</i><i style="left:1233px;width:120px;text-align:right;color:#ff3232">1.23</i><i class="nm" style="left:1364px">电气设备</i><i class="nm" style="left:1462px">江苏</i><i style="left:1465px;width:120px;text-align:right;color:#e6e6e6">5.52</i><i style="left:1540px;width:120px;text-align:right;color:#ff3232">13.11</i><span class="nei"><i style="right:0;color:#00dd00">112954</i></span><i style="left:1648px;width:120px;text-align:right;color:#ff3232">152414</i><i style="left:1715px;width:120px;text-align:right;color:#ff3232">0.74</i><i style="left:1782px;width:120px;text-align:right;color:#d2d200">507</i></div>
<div class="row" style="top:714px"><i style="left:-18px;width:80px;text-align:center;color:#e6e6e6">29</i><i style="left:52px;color:#e6e6e6">002757</i><i class="nm" style="left:117px">南兴股份</i><i style="left:156px;width:120px;text-align:right;color:#ff3232">9.99</i><i style="left:232px;width:120px;text-align:right;color:#ff3232">15.08</i><i style="left:375px;width:120px;text-align:right;color:#ff3232">15.08</i><i style="left:450px;width:120px;text-align:right;color:#e6e6e6">--</i><i style="left:299px;width:120px;text-align:right;color:#ff3232">1.37</i><i style="left:518px;width:120px;text-align:right;color:#d2d200">129767</i><i style="left:585px;width:120px;text-align:right;color:#e6e6e6">400</i><i style="left:1175px;width:120px;text-align:right;color:#10c8e0">1.92亿</i><i style="left:1233px;width:120px;text-align:right;color:#ff3232">1.86</i><i class="nm" style="left:1364px">专用机械</i><i class="nm" style="left:1462px">广东</i><i style="left:1465px;width:120px;text-align:right;color:#e6e6e6">7.44</i><i style="left:1540px;width:120px;text-align:right;color:#ff3232">14.81</i><span class="nei"><i style="right:0;color:#00dd00">69599</i></span><i style="left:1648px;width:120px;text-align:right;color:#ff3232">60168</i><i style="left:1715px;width:120px;text-align:right;color:#00dd00">1.16</i><i style="left:1782px;width:120px;text-align:right;color:#d2d200">34523</i></div>
<div class="row" style="top:737px"><i style="left:-18px;width:80px;text-align:center;color:#e6e6e6">30</i><i style="left:52px;color:#e6e6e6">002858</i><i class="nm" style="left:117px">力盛体育</i><i style="left:156px;width:120px;text-align:right;color:#ff3232">7.39</i><i style="left:232px;width:120px;text-align:right;color:#ff3232">16.28</i><i style="left:375px;width:120px;text-align:right;color:#ff3232">16.27</i><i style="left:450px;width:120px;text-align:right;color:#ff3232">16.28</i><i style="left:299px;width:120px;text-align:right;color:#ff3232">1.12</i><i style="left:518px;width:120px;text-align:right;color:#d2d200">122382</i><i style="left:585px;width:120px;text-align:right;color:#c800c8">1770</i><i style="left:642px;width:120px;text-align:right;color:#ff3232">0.25</i><i style="left:710px;width:120px;text-align:right;color:#e6e6e6">8.38</i><i style="left:785px;width:120px;text-align:right;color:#e6e6e6">15.16</i><i style="left:862px;width:120px;text-align:right;color:#ff3232">16.66</i><i style="left:938px;width:120px;text-align:right;color:#00dd00">15.02</i><i style="left:1014px;width:120px;text-align:right;color:#e6e6e6">15.16</i><i style="left:1099px;width:120px;text-align:right;color:#e6e6e6">588.18</i><i style="left:1175px;width:120px;text-align:right;color:#10c8e0">1.96亿</i><i style="left:1233px;width:120px;text-align:right;color:#ff3232">2.35</i><i class="nm" style="left:1364px">文教休闲</i><i class="nm" style="left:1462px">上海</i><i style="left:1465px;width:120px;text-align:right;color:#e6e6e6">10.82</i><i style="left:1540px;width:120px;text-align:right;color:#ff3232">16.02</i><span class="nei"><i style="right:0;color:#00dd00">52521</i></span><i style="left:1648px;width:120px;text-align:right;color:#ff3232">69861</i><i style="left:1715px;width:120px;text-align:right;color:#ff3232">0.75</i><i style="left:1782px;width:120px;text-align:right;color:#d2d200">23</i></div>
<div class="row" style="top:760px"><i style="left:-18px;width:80px;text-align:center;color:#e6e6e6">31</i><i style="left:52px;color:#e6e6e6">002955</i><i class="nm" style="left:117px">鸿合科技</i><i style="left:156px;width:120px;text-align:right;color:#ff3232">5.35</i><i style="left:232px;width:120px;text-align:right;color:#ff3232">27.94</i><i style="left:375px;width:120px;text-align:right;color:#ff3232">27.90</i><i style="left:450px;width:120px;text-align:right;color:#ff3232">27.94</i><i style="left:299px;width:120px;text-align:right;color:#ff3232">1.42</i><i style="left:518px;width:120px;text-align:right;color:#d2d200">97450</i><i style="left:585px;width:120px;text-align:right;color:#c800c8">1946</i><i style="left:642px;width:120px;text-align:right;color:#ff3232">1.42</i><i style="left:710px;width:120px;text-align:right;color:#e6e6e6">5.23</i><i style="left:785px;width:120px;text-align:right;color:#00dd00">26.26</i><i style="left:862px;width:120px;text-align:right;color:#ff3232">28.11</i><i style="left:938px;width:120px;text-align:right;color:#00dd00">26.26</i><i style="left:1014px;width:120px;text-align:right;color:#e6e6e6">26.52</i><i style="left:1099px;width:120px;text-align:right;color:#e6e6e6">22.95</i><i style="left:1175px;width:120px;text-align:right;color:#10c8e0">2.66亿</i><i style="left:1233px;width:120px;text-align:right;color:#ff3232">1.96</i><i class="nm" style="left:1364px">IT设备</i><i class="nm" style="left:1462px">深圳</i><i style="left:1465px;width:120px;text-align:right;color:#e6e6e6">6.98</i><i style="left:1540px;width:120px;text-align:right;color:#ff3232">27.34</i><span class="nei"><i style="right:0;color:#00dd00">50089</i></span><i style="left:1648px;width:120px;text-align:right;color:#ff3232">47361</i><i style="left:1715px;width:120px;text-align:right;color:#00dd00">1.06</i><i style="left:1782px;width:120px;text-align:right;color:#d2d200">30</i></div>
<div class="row" style="top:783px"><i style="left:-18px;width:80px;text-align:center;color:#e6e6e6">32</i><i style="left:52px;color:#e6e6e6">300078</i><i class="nm" style="left:117px">思创医惠</i><b class="flag">R</b><i style="left:156px;width:120px;text-align:right;color:#ff3232">5.52</i><i style="left:232px;width:120px;text-align:right;color:#ff3232">4.59</i><i style="left:375px;width:120px;text-align:right;color:#ff3232">4.58</i><i style="left:450px;width:120px;text-align:right;color:#ff3232">4.59</i><i style="left:299px;width:120px;text-align:right;color:#ff3232">0.24</i><i style="left:518px;width:120px;text-align:right;color:#d2d200">141294</i><i style="left:585px;width:120px;text-align:right;color:#c800c8">895</i><i style="left:642px;width:120px;text-align:right;color:#e6e6e6">0.00</i><i style="left:710px;width:120px;text-align:right;color:#e6e6e6">1.69</i><i style="left:785px;width:120px;text-align:right;color:#ff3232">4.37</i><i style="left:862px;width:120px;text-align:right;color:#ff3232">4.62</i><i style="left:938px;width:120px;text-align:right;color:#e6e6e6">4.35</i><i style="left:1014px;width:120px;text-align:right;color:#e6e6e6">4.35</i><i style="left:1090px;width:120px;text-align:right;color:#e6e6e6">--</i><i style="left:1175px;width:120px;text-align:right;color:#10c8e0">6420万</i><i style="left:1233px;width:120px;text-align:right;color:#ff3232">1.68</i><i class="nm" style="left:1364px">软件服务</i><i class="nm" style="left:1462px">浙江</i><i style="left:1465px;width:120px;text-align:right;color:#e6e6e6">6.21</i><i style="left:1540px;width:120px;text-align:right;color:#ff3232">4.54</i><span class="nei"><i style="right:0;color:#00dd00">60654</i></span><i style="left:1648px;width:120px;text-align:right;color:#ff3232">80640</i><i style="left:1715px;width:120px;text-align:right;color:#ff3232">0.75</i><i style="left:1782px;width:120px;text-align:right;color:#d2d200">297</i></div>
<div class="row" style="top:806px"><i style="left:-18px;width:80px;text-align:center;color:#e6e6e6">33</i><i style="left:52px;color:#e6e6e6">300086</i><i class="nm" style="left:117px">康芝药业</i><i style="left:156px;width:120px;text-align:right;color:#ff3232">1.99</i><i style="left:232px;width:120px;text-align:right;color:#ff3232">6.16</i><i style="left:375px;width:120px;text-align:right;color:#ff3232">6.16</i><i style="left:450px;width:120px;text-align:right;color:#ff3232">6.17</i><i style="left:299px;width:120px;text-align:right;color:#ff3232">0.12</i><i style="left:518px;width:120px;text-align:right;color:#d2d200">188861</i><i style="left:585px;width:120px;text-align:right;color:#c800c8">1709</i><i style="left:642px;width:120px;text-align:right;color:#00dd00">-0.31</i><i style="left:710px;width:120px;text-align:right;color:#e6e6e6">4.34</i><i style="left:785px;width:120px;text-align:right;color:#00dd00">5.96</i><i style="left:862px;width:120px;text-align:right;color:#ff3232">6.23</i><i style="left:938px;width:120px;text-align:right;color:#00dd00">5.96</i><i style="left:1014px;width:120px;text-align:right;color:#e6e6e6">6.04</i><i style="left:1090px;width:120px;text-align:right;color:#e6e6e6">--</i><i style="left:1175px;width:120px;text-align:right;color:#10c8e0">1.16亿</i><i style="left:1233px;width:120px;text-align:right;color:#00dd00">0.93</i><i class="nm" style="left:1364px">化学制药</i><i class="nm" style="left:1462px">海南</i><i style="left:1465px;width:120px;text-align:right;color:#e6e6e6">4.47</i><i style="left:1540px;width:120px;text-align:right;color:#ff3232">6.17</i><span class="nei"><i style="right:0;color:#00dd00">83599</i></span><i style="left:1648px;width:120px;text-align:right;color:#ff3232">105262</i><i style="left:1715px;width:120px;text-align:right;color:#ff3232">0.79</i><i style="left:1782px;width:120px;text-align:right;color:#d2d200">2179</i></div>
<div class="row" style="top:829px"><i style="left:-18px;width:80px;text-align:center;color:#e6e6e6">34</i><i style="left:52px;color:#e6e6e6">300242</i><i class="nm" style="left:117px">佳云科技</i><i style="left:156px;width:120px;text-align:right;color:#ff3232">6.98</i><i style="left:232px;width:120px;text-align:right;color:#ff3232">3.37</i><i style="left:375px;width:120px;text-align:right;color:#ff3232">3.36</i><i style="left:450px;width:120px;text-align:right;color:#ff3232">3.37</i><i style="left:299px;width:120px;text-align:right;color:#ff3232">0.22</i><i style="left:518px;width:120px;text-align:right;color:#d2d200">435106</i><i style="left:585px;width:120px;text-align:right;color:#c800c8">7787</i><i style="left:642px;width:120px;text-align:right;color:#e6e6e6">0.00</i><i style="left:710px;width:120px;text-align:right;color:#e6e6e6">6.91</i><i style="left:785px;width:120px;text-align:right;color:#00dd00">3.12</i><i style="left:862px;width:120px;text-align:right;color:#ff3232">3.42</i><i style="left:938px;width:120px;text-align:right;color:#00dd00">3.11</i><i style="left:1014px;width:120px;text-align:right;color:#e6e6e6">3.15</i><i style="left:1090px;width:120px;text-align:right;color:#e6e6e6">--</i><i style="left:1175px;width:120px;text-align:right;color:#10c8e0">1.44亿</i><i style="left:1233px;width:120px;text-align:right;color:#ff3232">2.06</i><i class="nm" style="left:1364px">互联网</i><i class="nm" style="left:1462px">广东</i><i style="left:1465px;width:120px;text-align:right;color:#e6e6e6">9.84</i><i style="left:1540px;width:120px;text-align:right;color:#ff3232">3.30</i><span class="nei"><i style="right:0;color:#00dd00">156133</i></span><i style="left:1648px;width:120px;text-align:right;color:#ff3232">278973</i><i style="left:1715px;width:120px;text-align:right;color:#ff3232">0.56</i><i style="left:1782px;width:120px;text-align:right;color:#d2d200">5684</i></div>
<div class="row" style="top:852px"><i style="left:-18px;width:80px;text-align:center;color:#e6e6e6">35</i><i style="left:52px;color:#e6e6e6">300269</i><i class="nm" style="left:117px">联建光电</i><i style="left:156px;width:120px;text-align:right;color:#ff3232">6.97</i><i style="left:232px;width:120px;text-align:right;color:#ff3232">3.99</i><i style="left:375px;width:120px;text-align:right;color:#ff3232">3.99</i><i style="left:450px;width:120px;text-align:right;color:#ff3232">4.00</i><i style="left:299px;width:120px;text-align:right;color:#ff3232">0.26</i><i style="left:518px;width:120px;text-align:right;color:#d2d200">471996</i><i style="left:585px;width:120px;text-align:right;color:#c800c8">4449</i><i style="left:642px;width:120px;text-align:right;color:#00dd00">-0.24</i><i style="left:710px;width:120px;text-align:right;color:#e6e6e6">8.98</i><i style="left:785px;width:120px;text-align:right;color:#e6e6e6">3.73</i><i style="left:862px;width:120px;text-align:right;color:#ff3232">4.08</i><i style="left:938px;width:120px;text-align:right;color:#00dd00">3.72</i><i style="left:1014px;width:120px;text-align:right;color:#e6e6e6">3.73</i><i style="left:1099px;width:120px;text-align:right;color:#e6e6e6">38.30</i><i style="left:1175px;width:120px;text-align:right;color:#10c8e0">1.86亿</i><i style="left:1233px;width:120px;text-align:right;color:#ff3232">2.54</i><i class="nm" style="left:1364px">元器件</i><i class="nm" style="left:1462px">深圳</i><i style="left:1465px;width:120px;text-align:right;color:#e6e6e6">9.65</i><i style="left:1540px;width:120px;text-align:right;color:#ff3232">3.94</i><span class="nei"><i style="right:0;color:#00dd00">215700</i></span><i style="left:1648px;width:120px;text-align:right;color:#ff3232">255296</i><i style="left:1715px;width:120px;text-align:right;color:#ff3232">0.85</i><i style="left:1782px;width:120px;text-align:right;color:#d2d200">2181</i></div>
<div class="row" style="top:875px"><i style="left:-18px;width:80px;text-align:center;color:#e6e6e6">36</i><i style="left:52px;color:#e6e6e6">300419</i><i class="nm" style="left:117px">浩丰科技</i><i style="left:156px;width:120px;text-align:right;color:#ff3232">4.83</i><i style="left:232px;width:120px;text-align:right;color:#ff3232">7.16</i><i style="left:375px;width:120px;text-align:right;color:#ff3232">7.15</i><i style="left:450px;width:120px;text-align:right;color:#ff3232">7.16</i><i style="left:299px;width:120px;text-align:right;color:#ff3232">0.33</i><i style="left:518px;width:120px;text-align:right;color:#d2d200">188960</i><i style="left:585px;width:120px;text-align:right;color:#c800c8">2078</i><i style="left:642px;width:120px;text-align:right;color:#00dd00">-0.13</i><i style="left:710px;width:120px;text-align:right;color:#e6e6e6">5.14</i><i style="left:785px;width:120px;text-align:right;color:#e6e6e6">6.83</i><i style="left:862px;width:120px;text-align:right;color:#ff3232">7.21</i><i style="left:938px;width:120px;text-align:right;color:#00dd00">6.80</i><i style="left:1014px;width:120px;text-align:right;color:#e6e6e6">6.83</i><i style="left:1099px;width:120px;text-align:right;color:#e6e6e6">147.47</i><i style="left:1175px;width:120px;text-align:right;color:#10c8e0">1.33亿</i><i style="left:1233px;width:120px;text-align:right;color:#ff3232">1.27</i><i class="nm" style="left:1364px">软件服务</i><i class="nm" style="left:1462px">北京</i><i style="left:1465px;width:120px;text-align:right;color:#e6e6e6">6.00</i><i style="left:1540px;width:120px;text-align:right;color:#ff3232">7.06</i><span class="nei"><i style="right:0;color:#00dd00">69493</i></span><i style="left:1648px;width:120px;text-align:right;color:#ff3232">119467</i><i style="left:1715px;width:120px;text-align:right;color:#ff3232">0.58</i><i style="left:1782px;width:120px;text-align:right;color:#d2d200">300</i></div>
<div class="row" style="top:898px"><i style="left:-18px;width:80px;text-align:center;color:#e6e6e6">37</i><i style="left:52px;color:#e6e6e6">300457</i><i class="nm" style="left:117px">赢合科技</i><b class="flag">R</b><i style="left:156px;width:120px;text-align:right;color:#ff3232">2.65</i><i style="left:232px;width:120px;text-align:right;color:#ff3232">20.54</i><i style="left:375px;width:120px;text-align:right;color:#ff3232">20.54</i><i style="left:450px;width:120px;text-align:right;color:#ff3232">20.55</i><i style="left:299px;width:120px;text-align:right;color:#ff3232">0.53</i><i style="left:518px;width:120px;text-align:right;color:#d2d200">304365</i><i style="left:585px;width:120px;text-align:right;color:#c800c8">3917</i><i style="left:642px;width:120px;text-align:right;color:#00dd00">-0.04</i><i style="left:710px;width:120px;text-align:right;color:#e6e6e6">5.80</i><i style="left:785px;width:120px;text-align:right;color:#00dd00">19.85</i><i style="left:862px;width:120px;text-align:right;color:#ff3232">20.82</i><i style="left:938px;width:120px;text-align:right;color:#00dd00">19.56</i><i style="left:1014px;width:120px;text-align:right;color:#e6e6e6">20.01</i><i style="left:1099px;width:120px;text-align:right;color:#e6e6e6">19.59</i><i style="left:1175px;width:120px;text-align:right;color:#10c8e0">6.17亿</i><i style="left:1233px;width:120px;text-align:right;color:#00dd00">0.74</i><i class="nm" style="left:1364px">专用机械</i><i class="nm" style="left:1462px">深圳</i><i style="left:1465px;width:120px;text-align:right;color:#e6e6e6">6.30</i><i style="left:1540px;width:120px;text-align:right;color:#ff3232">20.26</i><span class="nei"><i style="right:0;color:#00dd00">140918</i></span><i style="left:1648px;width:120px;text-align:right;color:#ff3232">163447</i><i style="left:1715px;width:120px;text-align:right;color:#ff3232">0.86</i><i style="left:1782px;width:120px;text-align:right;color:#d2d200">70</i></div>
<div class="row" style="top:921px"><i style="left:-18px;width:80px;text-align:center;color:#e6e6e6">38</i><i style="left:52px;color:#e6e6e6">301281</i><i class="nm" style="left:117px">科源制药</i><b class="flag">Z</b><i style="left:156px;width:120px;text-align:right;color:#ff3232">1.85</i><i style="left:232px;width:120px;text-align:right;color:#ff3232">38.48</i><i style="left:375px;width:120px;text-align:right;color:#ff3232">38.47</i><i style="left:450px;width:120px;text-align:right;color:#ff3232">38.48</i><i style="left:299px;width:120px;text-align:right;color:#ff3232">0.70</i><i style="left:518px;width:120px;text-align:right;color:#d2d200">68621</i><i style="left:585px;width:120px;text-align:right;color:#c800c8">1138</i><i style="left:642px;width:120px;text-align:right;color:#e6e6e6">0.00</i><i style="left:710px;width:120px;text-align:right;color:#e6e6e6">25.33</i><i style="left:785px;width:120px;text-align:right;color:#00dd00">37.30</i><i style="left:862px;width:120px;text-align:right;color:#ff3232">38.85</i><i style="left:938px;width:120px;text-align:right;color:#00dd00">36.98</i><i style="left:1014px;width:120px;text-align:right;color:#e6e6e6">37.78</i><i style="left:1099px;width:120px;text-align:right;color:#e6e6e6">46.96</i><i style="left:1175px;width:120px;text-align:right;color:#10c8e0">2.62亿</i><i style="left:1233px;width:120px;text-align:right;color:#ff3232">1.51</i><i class="nm" style="left:1364px">化学制药</i><i class="nm" style="left:1462px">山东</i><i style="left:1465px;width:120px;text-align:right;color:#e6e6e6">4.95</i><i style="left:1540px;width:120px;text-align:right;color:#ff3232">38.21</i><span class="nei"><i style="right:0;color:#00dd00">27585</i></span><i style="left:1648px;width:120px;text-align:right;color:#ff3232">31036</i><i style="left:1715px;width:120px;text-align:right;color:#00dd00">1.21</i><i style="left:1782px;width:120px;text-align:right;color:#d2d200">168</i></div>
<div id="dlg">
  <div id="dtitle">条件选股</div>
  <div class="dmin" style="top:9px"></div>
  <svg class="dx" style="top:4px;left:529px" width="12" height="12" viewBox="0 0 12 12"><path d="M1 1L11 11M11 1L1 11" stroke="#f4e0e0" stroke-width="1" fill="none"/></svg>
  <div class="dt" style="left:6px;top:35px">条件选股公式</div>
  <div class="combo" style="left:85px;top:30px;width:284px;height:25px">
    <div class="dt" style="left:2px;top:5px;color:#000">潜伏量化XG&nbsp;&nbsp;&nbsp;&nbsp;-</div>
    <div class="cbsep" style="left:264px"></div>
    <div class="carr" style="left:269px;top:10px"></div>
  </div>
  <div class="btn" style="left:373px;top:30px;width:42px;height:23px">查找</div>
  <div class="btn" style="left:420px;top:30px;width:57px;height:23px">用法注释</div>
  <div class="btn" style="left:481px;top:30px;width:57px;height:23px">查看公式</div>

  <div class="grp" style="left:4px;top:67px;width:210px;height:200px"></div>
  <div class="dt glab" style="left:11px;top:62px">计算参数</div>
  <div class="dt" style="left:10px;top:95px">无参数需要设置</div>
  <div class="vsep" style="left:191px;top:87px;height:125px"></div>
  <svg class="abs" style="left:195px;top:92px" width="10" height="8" viewBox="0 0 10 8"><path d="M1.5 6L5 2.5L8.5 6" stroke="#606060" stroke-width="1.3" fill="none"/></svg>
  <div class="abs" style="left:192px;top:104px;width:15px;height:58px;background:#cdcdcd"></div>
  <svg class="abs" style="left:194px;top:200px" width="10" height="8" viewBox="0 0 10 8"><path d="M1.5 2L5 5.5L8.5 2" stroke="#606060" stroke-width="1.3" fill="none"/></svg>
  <div class="dt" style="left:12px;top:244px">选股周期:</div>
  <div class="combo" style="left:73px;top:238px;width:128px;height:25px">
    <div class="dt" style="left:3px;top:5px;color:#000">日线</div>
    <div class="cbsep" style="left:110px"></div>
    <div class="carr" style="left:114px;top:10px"></div>
  </div>

  <div class="grp" style="left:4px;top:280px;width:210px;height:144px"></div>
  <div class="dt glab" style="left:11px;top:276px">选股范围</div>
  <div class="dt" style="left:10px;top:296px;letter-spacing:0.6px">上证A股&nbsp;深证A股</div>
  <div class="btn" style="left:139px;top:289px;width:63px;height:23px">改变范围</div>

  <div class="btn" style="left:223px;top:73px;width:66px;height:23px">加入条件</div>
  <div class="btn" style="left:223px;top:111px;width:66px;height:23px">删除条件</div>
  <div class="btn" style="left:223px;top:184px;width:66px;height:23px">引入方案</div>
  <div class="btn" style="left:223px;top:222px;width:66px;height:23px">保存方案</div>

  <div class="dt" style="left:303px;top:60px">选股条件列表</div>
  <div class="abs" style="left:301px;top:75px;width:236px;height:174px;background:#fff;border:1px solid #828790"></div>
  <div class="abs" style="left:303px;top:77px;width:232px;height:19px;background:#0078d7"></div>
  <div class="dt" style="left:305px;top:79px;color:#fff;font-size:13px">潜伏量化XG&nbsp;&nbsp;日线</div>

  <div class="radio" style="left:302px;top:256px"><div class="rdot"></div></div>
  <div class="dt" style="left:320px;top:256px;color:#a0a0a0">全部条件相与</div>
  <div class="radio" style="left:445px;top:256px"></div>
  <div class="dt" style="left:463px;top:256px;color:#a0a0a0">全部条件相或</div>
  <div class="dt" style="left:474px;top:277px;color:#ff0000">选股完毕.</div>

  <div class="chk" style="left:223px;top:298px"></div>
  <div class="dt" style="left:241px;top:297px">使用涨跌不定周期</div>
  <div class="abs" style="left:343px;top:298px;width:193px;height:13px;border:1px solid #bcbcbc;background:#e6e6e6"></div>

  <div class="dt" style="left:342px;top:321px">品种数</div>
  <div class="fld" style="left:381px;top:321px;width:41px">5079</div>
  <div class="dt" style="left:427px;top:321px">选中数</div>
  <div class="fld" style="left:466px;top:321px;width:71px">38/0.7%</div>

  <div class="chk" style="left:223px;top:350px"><svg width="11" height="11" viewBox="0 0 11 11" style="position:absolute;left:0;top:0"><path d="M2 5.5L4.5 8L9 2.5" stroke="#1aa01a" stroke-width="1.6" fill="none"/></svg></div>
  <div class="dt" style="left:241px;top:349px">前复权数据</div>
  <div class="chk" style="left:310px;top:350px"></div>
  <div class="dt" style="left:328px;top:349px">剔除当前未交易的品种</div>
  <div class="chk" style="left:457px;top:350px"></div>
  <div class="dt" style="left:475px;top:349px">剔除ST品种</div>

  <div class="chk" style="left:223px;top:378px"></div>
  <div class="dt" style="left:241px;top:378px">时间段内满足条件</div>
  <div class="btn" style="left:385px;top:372px;width:72px;height:23px">选股入板块</div>
  <div class="btn" style="left:471px;top:372px;width:66px;height:23px">执行选股</div>
  <div class="btn" style="left:471px;top:399px;width:66px;height:23px">关闭</div>
</div>

<div id="btabs">
  <div class="bt" style="left:0;width:47px">分类▲</div>
  <div class="bt" style="left:48px;width:35px;color:#ff3a3a">自选</div>
  <div class="bt" style="left:84px;width:47px">板块▲</div>
  <div class="bt" style="left:132px;width:47px">自定▲</div>
  <div class="bt g" style="left:180px;width:47px">港股▲</div>
  <div class="bt g" style="left:228px;width:47px">期权▲</div>
  <div class="bt g" style="left:276px;width:72px">期货现货▲</div>
  <div class="bt g" style="left:349px;width:70px">基金理财▲</div>
  <div class="bt g" style="left:420px;width:71px">美股环球▲</div>
  <div class="bt g" style="left:492px;width:71px">其它品种▲</div>
  <div class="abs" style="left:564px;top:0;width:14px;height:17px;background:#101214;border:1px solid #2a2e34"></div>
  <div class="abs" style="left:569px;top:4px;width:0;height:0;border-top:4.5px solid transparent;border-bottom:4.5px solid transparent;border-right:5px solid #6a7078"></div>
  <div class="abs" style="left:579px;top:1px;width:38px;height:15px;background:#2e343c"></div>
</div>
<div id="strip"></div>
<div id="status">
  <svg class="abs" style="left:3px;top:6px" width="16" height="16" viewBox="0 0 16 16"><circle cx="8" cy="8" r="7.5" fill="#7c828c"/><path d="M4.5 5L8 8L11.5 5M4.5 8.5L8 11.5L11.5 8.5" stroke="#1c2026" stroke-width="1.2" fill="none"/></svg>
  <div class="st" style="left:26px">上证</div>
  <div class="st r" style="left:55px">3021.55</div>
  <div class="st r" style="left:115px">3.77</div>
  <div class="st r" style="left:152px">0.12%</div>
  <div class="st" style="left:196px">4396亿</div>
  <div class="st" style="left:245px">深证</div>
  <div class="st r" style="left:273px">9927.99</div>
  <div class="st r" style="left:327px">157.15</div>
  <div class="st r" style="left:372px">1.61%</div>
  <div class="st" style="left:415px">5985亿</div>
  <div class="st" style="left:465px">沪深</div>
  <div class="st r" style="left:494px">3583.77</div>
  <div class="st r" style="left:550px">21.38</div>
  <div class="st r" style="left:591px">0.60%</div>
  <div class="st" style="left:635px">2430亿</div>
  <div class="st" style="left:685px">创业</div>
  <div class="st r" style="left:713px">1977.69</div>
  <div class="st r" style="left:770px">47.78</div>
  <div class="st r" style="left:812px">2.48%</div>
  <div class="st" style="left:855px">2780亿</div>
  <div class="st" style="left:905px">科创</div>
  <div class="st r" style="left:938px">878.13</div>
  <div class="st r" style="left:990px">16.28</div>
  <div class="st r" style="left:1032px">1.89%</div>
  <div class="st" style="left:1075px">832.7亿</div>
  
  <div class="st" style="left:1277px;color:#c0c4c8">北京联通主站Z2</div>
  <div class="st" style="left:1766px;top:-2px;color:#b8c8da;font-size:13px">:24</div>
  <svg class="abs" style="left:1120px;top:0" width="160" height="27" viewBox="0 0 160 27">
   <g fill="none" stroke="#fff" stroke-width="1"><rect x="8.5" y="8.5" width="49" height="6.5"/><rect x="60.5" y="8.5" width="49" height="6.5"/><path d="M20.5 8.5V15M45.5 8.5V15M72.5 8.5V15M97.5 8.5V15"/></g>
   <rect x="23.5" y="9" width="8.5" height="6" fill="#ff0000"/><rect x="33" y="9" width="10" height="6" fill="#008000"/>
   <rect x="75.5" y="9" width="8.5" height="6" fill="#ff0000"/><rect x="85" y="9" width="8.5" height="6" fill="#008000"/>
   <g fill="#009000">
   <rect x="12" y="16.3" width="6" height="1.7"/><rect x="20" y="16.3" width="6" height="1.7"/><rect x="28" y="16.3" width="6" height="1.7"/><rect x="36" y="16.3" width="6" height="1.7"/><rect x="44" y="16.3" width="6" height="1.7"/><rect x="52" y="16.3" width="6" height="1.7"/>
   <rect x="12" y="19.2" width="6" height="1.7"/><rect x="20" y="19.2" width="6" height="1.7"/><rect x="28" y="19.2" width="6" height="1.7"/><rect x="36" y="19.2" width="6" height="1.7"/><rect x="44" y="19.2" width="6" height="1.7"/><rect x="52" y="19.2" width="6" height="1.7"/>
   <rect x="64" y="16.3" width="6" height="1.7"/><rect x="72" y="16.3" width="6" height="1.7"/><rect x="80" y="16.3" width="6" height="1.7"/><rect x="88" y="16.3" width="6" height="1.7"/><rect x="96" y="16.3" width="6" height="1.7"/><rect x="104" y="16.3" width="6" height="1.7"/>
   <rect x="64" y="19.2" width="6" height="1.7"/><rect x="72" y="19.2" width="6" height="1.7"/><rect x="80" y="19.2" width="6" height="1.7"/><rect x="88" y="19.2" width="6" height="1.7"/><rect x="96" y="19.2" width="6" height="1.7"/><rect x="104" y="19.2" width="6" height="1.7"/>
   </g>
   <defs><linearGradient id="gb" x1="0" y1="0" x2="0" y2="1"><stop offset="0" stop-color="#9aa0a8"/><stop offset="1" stop-color="#6c727a"/></linearGradient></defs>
   <rect x="119" y="8" width="15" height="12" rx="2" fill="url(#gb)"/>
   <path d="M123.3 10.5Q121.5 14 123.3 17.5M129.7 10.5Q131.5 14 129.7 17.5" stroke="#30343a" stroke-width="1.1" fill="none"/><circle cx="126.5" cy="14" r="1.1" fill="#30343a"/>
   <rect x="139" y="8" width="14.5" height="12" rx="2" fill="url(#gb)"/>
   <path d="M144.5 10.5L146.5 9.8V18.5" stroke="#e8eef4" stroke-width="1.5" fill="none"/>
  </svg>
  <svg class="abs" style="left:1796px;top:7px" width="18" height="14" viewBox="0 0 18 14"><rect x="1" y="1" width="15" height="11" rx="2" fill="#8a9098"/><g fill="#20242a"><rect x="3" y="3.2" width="1.6" height="1.3"/><rect x="5.6" y="3.2" width="1.6" height="1.3"/><rect x="8.2" y="3.2" width="1.6" height="1.3"/><rect x="10.8" y="3.2" width="1.6" height="1.3"/><rect x="13" y="3.2" width="1.4" height="1.3"/><rect x="3" y="5.6" width="1.6" height="1.3"/><rect x="5.6" y="5.6" width="1.6" height="1.3"/><rect x="8.2" y="5.6" width="1.6" height="1.3"/><rect x="10.8" y="5.6" width="1.6" height="1.3"/><rect x="13" y="5.6" width="1.4" height="1.3"/><rect x="4.5" y="8.3" width="8" height="1.5"/></g></svg>
  <svg class="abs" style="left:1826px;top:5px" width="20" height="18" viewBox="0 0 20 18"><rect x="1" y="2" width="17" height="11" rx="1.5" fill="#8a9098"/><path d="M3 7.5H7L8.5 5L10.5 10L12 7.5H16" stroke="#20242a" stroke-width="1.2" fill="none"/><rect x="8.5" y="13" width="2" height="2.5" fill="#8a9098"/><rect x="5" y="15" width="9" height="1.5" fill="#8a9098"/></svg>
  <svg class="abs" style="left:1855px;top:4px" width="20" height="20" viewBox="0 0 20 20"><path d="M3.5 3.5A8.5 8.5 0 0 0 15.5 15.5Z" fill="#8a9098"/><path d="M9 10L15 4" stroke="#8a9098" stroke-width="1.6"/><circle cx="15.5" cy="3.5" r="1.8" fill="#8a9098"/><path d="M6.5 15L4 19.5H10Z" fill="#8a9098"/></svg>
  <svg class="abs" style="left:1887px;top:5px" width="18" height="18" viewBox="0 0 18 18"><circle cx="9" cy="9" r="8.2" fill="#8a9098"/><path d="M10.5 3.5L5.8 10H9L7.8 14.5L12.2 8H9Z" fill="#20242a"/></svg>
</div>
<div id="sogou">
  <div class="abs" style="left:16px;top:6px;width:150px;height:24px;background:#f8f9fb"></div>
  <svg class="abs" style="left:0;top:0" width="34" height="32" viewBox="0 0 34 32"><path d="M2.2 11.2Q1.6 9.2 3.6 8.4L22 3.4Q24.2 2.8 24.8 5L30 20Q30.6 22.2 28.6 23L9.8 29.4Q7.8 30 7.2 28Z" fill="#36b82a"/><path d="M23.6 11C17.5 9.6 8.5 10.2 7.6 14.4C6.8 18.2 21.8 15.8 21.6 19.8C21.4 23.8 12.5 25.6 8.6 25.2" stroke="#fff" stroke-width="3.6" fill="none" stroke-linecap="round"/></svg>
  <svg class="abs" style="left:36px;top:11px" width="15" height="15" viewBox="0 0 15 15"><path d="M0.9 14.6L7.5 0.8L14.1 14.6M3.3 9.8H11.7" stroke="#4a5060" stroke-width="1.9" fill="none"/></svg>
  <svg class="abs" style="left:0;top:0" width="80" height="32" viewBox="0 0 80 32"><path d="M68.5 12.1C71.5 13.5 72.6 16.6 72 19C71.2 22.6 67.8 25.2 64.6 24.9C62 24.7 60 23.2 59.1 21.3C61.2 22.2 63.5 21.9 65.2 20.6C67.6 18.8 68.6 15.6 68.5 12.1Z" fill="#4a5060"/></svg>
  <svg class="abs" style="left:81px;top:14px" width="11" height="11" viewBox="0 0 11 11"><circle cx="1.8" cy="2" r="1.6" fill="#4a5060"/><path d="M8.5 3.5C9.2 5.5 8.8 7.8 6.8 9.8" stroke="#4a5060" stroke-width="1.9" fill="none" stroke-linecap="round"/></svg>
  <svg class="abs" style="left:101px;top:12px" width="17" height="13" viewBox="0 0 17 13"><rect x="0.8" y="0.8" width="15.4" height="11.4" rx="1.5" fill="none" stroke="#4a5060" stroke-width="1.6"/><g fill="#4a5060"><rect x="3" y="3" width="2" height="1.7"/><rect x="6" y="3" width="2" height="1.7"/><rect x="9" y="3" width="2" height="1.7"/><rect x="12" y="3" width="2" height="1.7"/><rect x="3" y="5.8" width="2" height="1.7"/><rect x="6" y="5.8" width="2" height="1.7"/><rect x="9" y="5.8" width="2" height="1.7"/><rect x="12" y="5.8" width="2" height="1.7"/><rect x="4.5" y="8.6" width="8" height="1.7"/></g></svg>
  <svg class="abs" style="left:126px;top:11px" width="13" height="14" viewBox="0 0 13 14"><circle cx="6.5" cy="3.2" r="3" fill="#4a5060"/><path d="M2 6.5H11L12.8 10L11 11V13.5H2V11L0.2 10Z" fill="#4a5060"/></svg>
  <svg class="abs" style="left:145px;top:11px" width="15" height="15" viewBox="0 0 15 15"><g fill="#4a5060"><circle cx="3.6" cy="3.6" r="3.4"/><circle cx="11.4" cy="3.6" r="3.4"/><circle cx="3.6" cy="11.4" r="3.4"/><circle cx="11.4" cy="11.4" r="3.4"/><rect x="3.6" y="3.6" width="7.8" height="7.8"/></g><circle cx="11.8" cy="3.2" r="1.3" fill="#f8f9fb"/></svg>
</div>
<div class="abs" style="left:0;top:1040px;width:1920px;height:2px;background:#3a3c30"></div>
<div class="abs" style="left:120px;top:1040px;width:48px;height:2px;background:#8a8a78"></div>

</body>
</html>
